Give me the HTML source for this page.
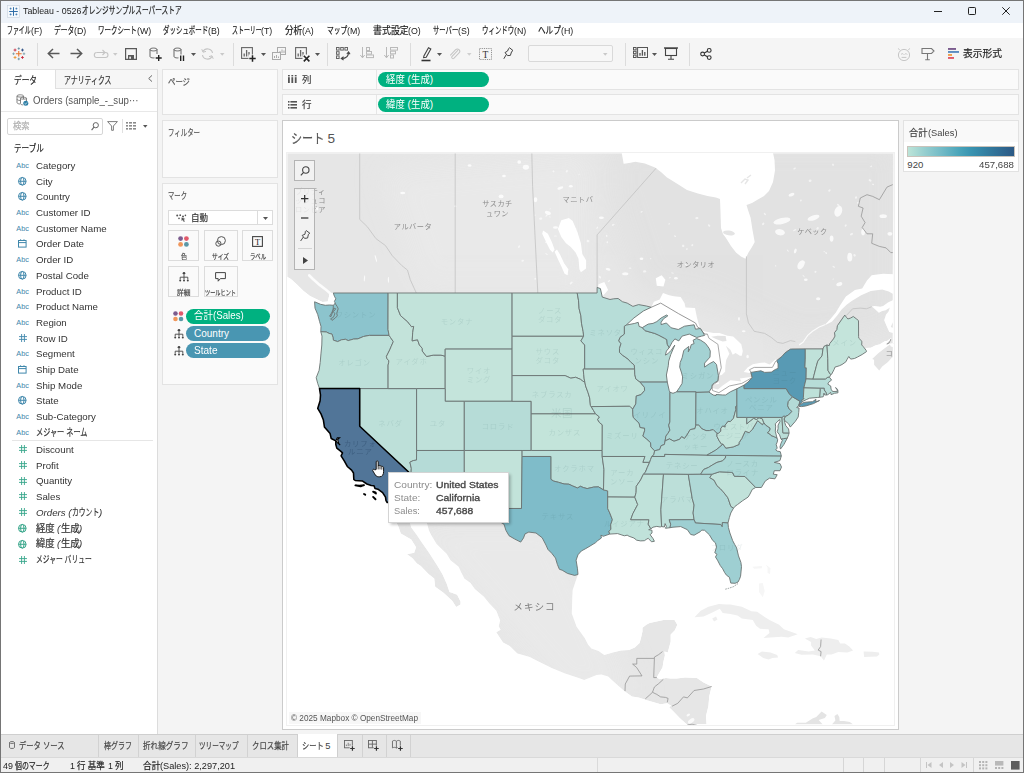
<!DOCTYPE html>
<html lang="ja"><head><meta charset="utf-8"><title>Tableau - 0526オレンジサンプルスーパーストア</title>
<style>
*{box-sizing:border-box;margin:0;padding:0}
html,body{width:1024px;height:773px;overflow:hidden}
body{position:relative;background:#f4f4f4;font-family:"Liberation Sans","Noto Sans CJK JP",sans-serif;color:#333}
.a{position:absolute}
.t{position:absolute;white-space:nowrap;line-height:1;margin-top:-.5em;display:inline-block}
.r{display:inline-block;transform-origin:0 50%}
.j{-webkit-text-stroke:.2px currentColor;font-style:normal}
.ns .j{-webkit-text-stroke:0}
.card{position:absolute;background:#fafafa;border:1px solid #e3e3e3}
.pill{position:absolute;border-radius:8px;height:15px}
.g{background:#00b180}.b{background:#4996b2}
.vd{position:absolute;width:1px;background:#d8d8d8}
.hd{position:absolute;height:1px;background:#e2e2e2}
svg{position:absolute;overflow:visible}
.mk{position:absolute;background:#fafafa;border:1px solid #dcdcdc}
.mapbtn{position:absolute;background:rgba(244,244,244,.84);border:1px solid #b4b4b4}
</style></head><body>
<!-- title bar -->
<div class="a" style="left:0;top:0;width:1024px;height:23px;background:#eef3f9"></div>
<div class="a" style="left:0;top:23px;width:1024px;height:15px;background:#fff"></div>
<div class="a" style="left:0;top:38px;width:1024px;height:31px;background:#f5f5f5"></div>
<!-- data pane -->
<div class="a" style="left:0;top:69px;width:158px;height:665px;background:#fff;border-top:1px solid #e2e2e2;border-right:1px solid #dcdcdc"></div>
<div class="a" style="left:55px;top:69px;width:103px;height:20px;background:#f6f6f6;border:1px solid #e0e0e0;border-right-color:#dcdcdc"></div>
<div class="hd" style="left:1px;top:111px;width:156px;background:#e8e8e8"></div>
<div class="a" style="left:7px;top:118px;width:96px;height:17px;background:#fff;border:1px solid #d6d6d6;border-radius:2px"></div>
<div class="vd" style="left:122px;top:119px;height:14px;background:#e0e0e0"></div>
<div class="hd" style="left:12px;top:440px;width:141px;background:#e6e6e6"></div>
<!-- cards -->
<div class="card" style="left:162px;top:69px;width:116px;height:46px"></div>
<div class="card" style="left:162px;top:120px;width:116px;height:58px"></div>
<div class="card" style="left:162px;top:183px;width:116px;height:202px"></div>
<div class="mk" style="left:168px;top:210px;width:105px;height:15px;background:#fff"></div>
<div class="vd" style="left:257px;top:211px;height:13px;background:#dcdcdc"></div>
<div class="mk" style="left:168px;top:230px;width:31px;height:31px"></div>
<div class="mk" style="left:204px;top:230px;width:34px;height:31px"></div>
<div class="mk" style="left:242px;top:230px;width:31px;height:31px"></div>
<div class="mk" style="left:168px;top:266px;width:31px;height:31px"></div>
<div class="mk" style="left:204px;top:266px;width:34px;height:31px"></div>
<div class="pill g" style="left:186px;top:309px;width:84px"></div>
<div class="pill b" style="left:186px;top:326px;width:84px"></div>
<div class="pill b" style="left:186px;top:343px;width:84px"></div>
<!-- shelves -->
<div class="card" style="left:282px;top:69px;width:737px;height:21px"></div>
<div class="card" style="left:282px;top:94px;width:737px;height:21px"></div>
<div class="vd" style="left:376px;top:70px;height:19px;background:#e6e6e6"></div>
<div class="vd" style="left:376px;top:95px;height:19px;background:#e6e6e6"></div>
<div class="pill g" style="left:378px;top:72px;width:111px;height:15px"></div>
<div class="pill g" style="left:378px;top:97.3px;width:111px;height:15px"></div>
<!-- viz frame -->
<div class="a" style="left:282px;top:120px;width:617px;height:610px;background:#fff;border:1px solid #cbcbcb"></div>
<div class="a" style="left:286px;top:152px;width:609px;height:573.5px;border:1px solid #f0f0f0"></div>
<svg class="map" width="606.6" height="571.2" viewBox="287.0 153.0 606.6 571.2" style="position:absolute;left:287.0px;top:153.0px">
<defs><clipPath id="mc"><rect x="287.0" y="153.0" width="606.6" height="571.2"/></clipPath>
<filter id="bl" x="-10%" y="-10%" width="120%" height="120%"><feGaussianBlur stdDeviation="14"/></filter>
<filter id="b1" x="-5%" y="-5%" width="110%" height="110%"><feGaussianBlur stdDeviation="0.5"/></filter></defs>
<g clip-path="url(#mc)">
<rect x="287.0" y="153.0" width="606.6" height="571.2" fill="#fff"/>
<path d="M287.0,153.0 621.8,153.0 621.8,153.0 623.7,163.7 629.0,163.0 635.4,161.7 645.0,163.5 655.0,167.6 661.0,172.0 666.7,177.3 676.0,183.0 687.0,190.0 698.0,193.5 707.5,196.0 716.0,197.5 720.0,199.0 720.5,211.5 721.0,228.0 723.0,234.0 726.0,238.0 731.0,246.0 736.0,252.5 741.0,256.5 745.5,258.7 748.5,252.5 752.0,247.0 754.7,242.0 752.5,230.0 750.6,217.7 748.0,210.0 746.5,205.0 752.0,203.0 757.0,200.0 764.0,196.0 769.0,191.0 773.0,182.0 775.0,170.5 774.5,160.0 773.0,153.0 893.6,153.0 892.8,274.3 883.2,273.8 871.7,275.3 867.0,280.5 862.2,288.6 855.0,290.1 849.8,293.7 845.9,296.6 840.2,305.3 835.9,312.4 830.7,318.8 825.9,323.7 825.4,325.1 832.1,321.6 837.4,315.2 841.6,309.6 846.9,304.6 851.7,301.0 861.2,295.2 870.8,291.1 882.2,289.4 888.9,291.5 892.8,293.7 892.8,300.2 888.0,302.4 883.2,306.0 880.3,306.7 874.6,306.0 871.7,306.4 873.7,308.1 878.9,312.8 882.2,311.0 885.6,310.3 889.9,307.4 888.5,311.7 886.1,314.5 884.2,320.2 886.5,325.7 889.4,332.0 892.8,332.7 892.8,343.4 891.5,343.6 888.0,343.9 885.6,344.6 888.9,340.9 890.4,339.6 891.8,337.8 889.4,339.3 887.0,340.9 885.1,340.9 879.9,344.3 875.1,345.4 870.8,347.7 865.5,348.1 863.3,346.6 846.9,345.0 789.6,382.1 698.8,474.2 579.4,530.8 573.7,573.1 578.0,574.5 575.6,581.5 572.7,590.0 572.3,597.3 571.8,613.4 576.6,626.7 584.7,637.9 588.0,644.5 591.4,648.6 598.5,651.1 604.3,655.1 612.9,652.6 621.0,650.6 629.1,650.1 634.8,647.6 639.6,643.0 641.0,637.9 642.5,631.3 642.5,627.8 646.3,624.7 649.6,623.1 663.5,620.1 674.5,620.1 677.3,624.7 674.9,630.3 670.7,634.4 670.7,641.5 667.8,652.6 664.4,651.6 664.9,655.6 663.5,661.6 662.5,667.6 657.8,675.6 656.8,677.6 659.7,679.3 665.9,678.1 670.2,678.6 676.9,678.6 685.0,677.4 696.9,678.1 703.6,682.6 711.7,686.5 709.3,696.1 708.4,706.2 706.0,716.0 706.5,723.8 706.5,724.2 686.9,724.2 685.5,723.3 679.7,718.0 673.0,711.1 669.2,707.2 671.1,705.7 667.3,703.3 660.6,704.3 647.7,700.6 638.6,697.4 632.0,696.4 624.3,691.0 615.7,683.6 608.1,676.6 601.4,674.6 596.6,674.9 584.2,680.1 578.8,678.1 565.1,673.6 551.7,668.1 536.0,660.3 529.7,657.1 517.3,653.6 509.7,646.1 503.0,642.5 496.3,632.3 500.6,629.8 498.7,626.2 500.1,620.6 496.3,610.8 489.4,603.5 483.9,596.8 474.8,588.9 470.5,583.1 464.3,578.4 461.0,572.0 458.6,566.7 450.5,560.2 446.6,553.8 440.9,548.3 436.6,544.0 431.3,535.2 429.0,530.8 426.6,522.0 421.3,516.4 417.0,514.1 409.4,510.8 408.9,519.7 411.3,527.5 417.0,535.2 421.3,541.8 429.0,552.7 433.5,559.7 436.6,564.5 442.3,574.1 446.6,583.6 449.5,592.1 452.4,593.1 457.1,594.7 460.5,601.5 460.5,604.6 456.2,606.9 452.4,600.9 443.8,593.1 435.2,586.8 434.2,578.4 428.5,574.1 420.8,566.1 417.0,563.4 412.2,558.1 407.0,554.3 414.2,552.7 416.1,547.2 411.3,539.6 400.8,533.6 398.4,526.4 395.0,519.7 392.2,510.2 387.2,502.5 397.9,491.5 369.3,413.9 350.1,321.6 340.6,294.5 333.3,293.0 330.1,293.0 329.1,295.9 327.7,301.4 322.4,302.0 317.2,299.5 310.0,295.9 303.3,290.8 296.7,284.2 290.9,279.0 287.1,276.8 287.0,276.8Z" fill="#e6e6e6"/>
<g filter="url(#bl)" opacity="0.9"><path d="M610,140 L900,140 L900,330 L800,345 L700,300 L640,290 L610,200Z" fill="#e1e1e1"/><path d="M380,170 L590,150 L590,290 L420,290Z" fill="#e9e9e9"/><path d="M400,520 L560,520 L640,700 L560,700Z" fill="#e9e9e9"/></g>
<path d="M651.2,307.3 653.9,301.7 659.7,299.5 663.0,293.0 669.2,295.2 674.0,296.2 680.7,297.1 684.5,303.1 685.5,307.4 695.0,308.1 696.9,317.3 698.4,323.0 700.3,328.5 694.1,332.7 674.9,332.7 655.8,328.5 641.5,329.9 624.3,327.1 622.4,323.0 632.0,314.5 643.4,308.1Z" fill="#fff"/>
<path d="M664.4,395.0 684.5,395.0 686.4,375.6 685.5,355.8 692.1,353.1 695.0,345.0 697.9,340.9 697.9,334.7 689.3,332.7 673.0,335.4 664.4,355.8 662.5,375.6Z" fill="#fff"/>
<path d="M700.3,328.5 703.6,331.3 707.9,332.0 713.6,333.0 719.4,333.0 727.5,335.8 733.2,336.4 738.0,340.9 741.3,344.3 742.8,351.1 741.8,355.8 739.9,355.8 735.6,353.1 732.7,354.7 730.4,349.7 725.9,345.7 729.4,353.8 726.2,360.1 725.4,365.8 725.1,371.7 721.8,375.0 718.9,375.6 716.0,375.6 701.7,371.7 703.6,355.8 700.7,342.3 697.9,340.9 697.9,334.7 698.8,331.3Z" fill="#fff"/>
<path d="M718.9,375.6 718.4,380.8 718.9,384.1 713.2,384.5 712.2,387.9 717.9,389.6 722.7,385.4 730.4,380.2 737.5,381.1 741.3,381.5 739.9,378.5 749.0,377.3 752.1,376.9 754.2,378.2 749.5,384.7 739.0,391.2 727.5,397.5 715.1,397.5 707.4,393.7 709.3,386.0 714.1,379.5 717.0,375.6Z" fill="#fff"/>
<path d="M750.7,372.2 749.5,373.0 743.7,372.0 747.6,367.4 752.8,364.2 759.3,363.1 764.7,362.5 769.5,364.5 771.4,363.1 775.3,359.5 777.2,359.8 781.0,363.8 780.0,371.7 765.7,375.6 751.4,375.6Z" fill="#fff"/>
<path d="M580.9,272.3 586.1,268.6 586.1,260.2 582.3,254.1 580.9,243.3 577.5,232.2 572.7,221.0 568.9,218.1 561.3,220.2 557.9,229.0 561.3,237.0 566.0,243.3 570.8,247.1 575.6,252.6 578.5,258.7 579.4,269.3Z" fill="#fff"/>
<path d="M567.5,275.3 568.4,269.3 564.1,263.3 560.3,254.9 557.0,249.5 554.6,251.8 558.4,260.2 561.3,266.3 564.6,273.8Z" fill="#fff"/>
<path d="M554.6,249.5 551.7,241.7 547.9,233.8 543.1,230.6 542.2,233.8 546.0,241.7 549.8,249.5 552.7,252.6Z" fill="#fff"/>
<path d="M656.8,285.7 663.5,286.4 665.4,279.8 661.6,275.3 655.8,278.3Z" fill="#fff"/>
<path d="M597.1,293.0 602.3,296.6 608.1,290.1 604.3,282.0 598.5,284.2Z" fill="#fff"/>
<path d="M711.3,336.8 717.9,335.7 725.6,336.1 726.5,340.9 722.7,341.6 716.0,338.9Z" fill="#e3e3e3"/>
<path d="M247.0,113.0 H933.6 V764.2 H247.0 Z M287.0,153.0 621.8,153.0 621.8,153.0 623.7,163.7 629.0,163.0 635.4,161.7 645.0,163.5 655.0,167.6 661.0,172.0 666.7,177.3 676.0,183.0 687.0,190.0 698.0,193.5 707.5,196.0 716.0,197.5 720.0,199.0 720.5,211.5 721.0,228.0 723.0,234.0 726.0,238.0 731.0,246.0 736.0,252.5 741.0,256.5 745.5,258.7 748.5,252.5 752.0,247.0 754.7,242.0 752.5,230.0 750.6,217.7 748.0,210.0 746.5,205.0 752.0,203.0 757.0,200.0 764.0,196.0 769.0,191.0 773.0,182.0 775.0,170.5 774.5,160.0 773.0,153.0 893.6,153.0 892.8,274.3 883.2,273.8 871.7,275.3 867.0,280.5 862.2,288.6 855.0,290.1 849.8,293.7 845.9,296.6 840.2,305.3 835.9,312.4 830.7,318.8 825.9,323.7 825.4,325.1 832.1,321.6 837.4,315.2 841.6,309.6 846.9,304.6 851.7,301.0 861.2,295.2 870.8,291.1 882.2,289.4 888.9,291.5 892.8,293.7 892.8,300.2 888.0,302.4 883.2,306.0 880.3,306.7 874.6,306.0 871.7,306.4 873.7,308.1 878.9,312.8 882.2,311.0 885.6,310.3 889.9,307.4 888.5,311.7 886.1,314.5 884.2,320.2 886.5,325.7 889.4,332.0 892.8,332.7 892.8,343.4 891.5,343.6 888.0,343.9 885.6,344.6 888.9,340.9 890.4,339.6 891.8,337.8 889.4,339.3 887.0,340.9 885.1,340.9 879.9,344.3 875.1,345.4 870.8,347.7 865.5,348.1 863.3,346.6 846.9,345.0 789.6,382.1 698.8,474.2 579.4,530.8 573.7,573.1 578.0,574.5 575.6,581.5 572.7,590.0 572.3,597.3 571.8,613.4 576.6,626.7 584.7,637.9 588.0,644.5 591.4,648.6 598.5,651.1 604.3,655.1 612.9,652.6 621.0,650.6 629.1,650.1 634.8,647.6 639.6,643.0 641.0,637.9 642.5,631.3 642.5,627.8 646.3,624.7 649.6,623.1 663.5,620.1 674.5,620.1 677.3,624.7 674.9,630.3 670.7,634.4 670.7,641.5 667.8,652.6 664.4,651.6 664.9,655.6 663.5,661.6 662.5,667.6 657.8,675.6 656.8,677.6 659.7,679.3 665.9,678.1 670.2,678.6 676.9,678.6 685.0,677.4 696.9,678.1 703.6,682.6 711.7,686.5 709.3,696.1 708.4,706.2 706.0,716.0 706.5,723.8 706.5,724.2 686.9,724.2 685.5,723.3 679.7,718.0 673.0,711.1 669.2,707.2 671.1,705.7 667.3,703.3 660.6,704.3 647.7,700.6 638.6,697.4 632.0,696.4 624.3,691.0 615.7,683.6 608.1,676.6 601.4,674.6 596.6,674.9 584.2,680.1 578.8,678.1 565.1,673.6 551.7,668.1 536.0,660.3 529.7,657.1 517.3,653.6 509.7,646.1 503.0,642.5 496.3,632.3 500.6,629.8 498.7,626.2 500.1,620.6 496.3,610.8 489.4,603.5 483.9,596.8 474.8,588.9 470.5,583.1 464.3,578.4 461.0,572.0 458.6,566.7 450.5,560.2 446.6,553.8 440.9,548.3 436.6,544.0 431.3,535.2 429.0,530.8 426.6,522.0 421.3,516.4 417.0,514.1 409.4,510.8 408.9,519.7 411.3,527.5 417.0,535.2 421.3,541.8 429.0,552.7 433.5,559.7 436.6,564.5 442.3,574.1 446.6,583.6 449.5,592.1 452.4,593.1 457.1,594.7 460.5,601.5 460.5,604.6 456.2,606.9 452.4,600.9 443.8,593.1 435.2,586.8 434.2,578.4 428.5,574.1 420.8,566.1 417.0,563.4 412.2,558.1 407.0,554.3 414.2,552.7 416.1,547.2 411.3,539.6 400.8,533.6 398.4,526.4 395.0,519.7 392.2,510.2 387.2,502.5 397.9,491.5 369.3,413.9 350.1,321.6 340.6,294.5 333.3,293.0 330.1,293.0 329.1,295.9 327.7,301.4 322.4,302.0 317.2,299.5 310.0,295.9 303.3,290.8 296.7,284.2 290.9,279.0 287.1,276.8 287.0,276.8Z" fill="#fff" fill-rule="evenodd"/>
<ellipse cx="729" cy="233" rx="6" ry="2.4" fill="#e4e4e4" transform="rotate(8 729 233)"/><path d="M741,183 l4,-4 l3,1 l-3,4 M747,178 l4,-3" stroke="#e6e6e6" stroke-width="1.4" fill="none"/>
<path d="M694.5,617.3 700.7,610.8 708.4,606.7 718.9,604.1 726.5,604.6 730.4,604.6 741.8,606.7 751.4,611.3 757.1,611.8 764.7,617.0 769.5,620.1 779.1,624.7 783.9,629.3 794.4,632.9 797.7,634.2 788.2,637.4 781.5,636.7 770.5,637.4 763.5,637.9 769.5,632.9 768.6,629.3 760.0,628.8 756.1,625.7 752.8,620.1 741.8,618.5 737.5,615.4 730.4,613.9 722.7,612.9 719.8,608.7 711.3,612.9 703.6,616.5Z" fill="#eeeeee"/>
<path d="M712.2,618.5 716.0,616.5 717.5,619.6 714.1,621.6Z" fill="#eeeeee"/>
<path d="M794.8,653.1 798.2,650.1 808.7,651.6 814.9,650.6 811.1,645.5 811.1,642.0 804.9,638.5 810.6,636.9 816.3,639.0 821.6,637.4 830.7,638.5 838.3,640.0 840.2,643.5 845.0,643.5 849.3,646.6 853.1,650.6 847.4,652.6 838.3,652.1 831.6,654.6 826.8,654.6 824.0,660.6 820.6,656.3 813.0,654.6 801.5,654.8Z" fill="#eeeeee"/>
<path d="M757.6,654.1 761.9,651.6 770.5,652.6 777.2,655.1 778.1,657.6 772.4,658.1 768.6,659.4 763.3,658.1Z" fill="#eeeeee"/>
<path d="M863.6,651.6 872.7,651.8 878.9,652.6 879.4,654.6 877.0,656.6 864.1,657.1Z" fill="#eeeeee"/>
<path d="M759.0,583.6 762.8,583.1 764.7,591.0 762.8,597.3 759.0,592.1Z" fill="#f6f6f6"/>
<path d="M752.3,566.7 761.9,566.1 761.9,568.3 754.2,568.8Z" fill="#f6f6f6"/>
<path d="M765.7,564.5 770.5,568.3 770.0,574.1 767.6,573.1 767.6,567.7Z" fill="#f6f6f6"/>
<path d="M892.8,347.0 890.8,346.4 889.9,344.6 884.4,348.4 878.0,353.4 872.2,359.1 874.1,359.8 874.1,364.8 879.2,370.4 882.2,366.4 888.0,362.1 891.8,357.8 892.8,357.1Z" fill="#e4e4e4"/>
<path d="M892.8,322.3 890.8,326.9 892.8,327.8Z" fill="#e4e4e4"/>
<path d="M794.4,724.8 797.2,722.8 805.8,722.8 812.5,718.4 816.3,717.0 821.6,711.6 826.8,715.0 824.9,718.0 818.7,719.9 823.0,724.8Z" fill="#e4e4e4"/>
<path d="M831.6,724.8 835.4,720.4 834.5,716.0 837.4,714.0 839.3,717.0 839.7,720.9 844.0,720.9 849.8,721.9 853.6,724.8Z" fill="#e4e4e4"/>
<g fill="#fff" opacity="0.8" filter="url(#b1)">
<ellipse cx="801.0" cy="264.8" rx="3.1" ry="4.96" transform="rotate(30 801.0 264.8)"/>
<ellipse cx="849.8" cy="257.2" rx="2.48" ry="4.34" transform="rotate(0 849.8 257.2)"/>
<ellipse cx="839.3" cy="284.2" rx="3.1" ry="1.86" transform="rotate(-20 839.3 284.2)"/>
<ellipse cx="818.2" cy="298.8" rx="2.17" ry="1.55" transform="rotate(0 818.2 298.8)"/>
<ellipse cx="781.9" cy="221.0" rx="8.68" ry="3.1" transform="rotate(-12 781.9 221.0)"/>
<ellipse cx="813.5" cy="217.8" rx="6.2" ry="2.48" transform="rotate(-18 813.5 217.8)"/>
<ellipse cx="838.3" cy="211.3" rx="3.72" ry="5.58" transform="rotate(20 838.3 211.3)"/>
<ellipse cx="765.7" cy="189.6" rx="3.1" ry="1.86" transform="rotate(0 765.7 189.6)"/>
<ellipse cx="791.5" cy="194.7" rx="3.1" ry="1.55" transform="rotate(-20 791.5 194.7)"/>
<ellipse cx="780.0" cy="232.2" rx="4.96" ry="3.1" transform="rotate(10 780.0 232.2)"/>
<ellipse cx="831.6" cy="238.6" rx="1.86" ry="3.1" transform="rotate(0 831.6 238.6)"/>
<ellipse cx="805.8" cy="279.8" rx="1.86" ry="1.24" transform="rotate(0 805.8 279.8)"/>
<ellipse cx="795.3" cy="251.0" rx="1.24" ry="2.48" transform="rotate(20 795.3 251.0)"/>
<ellipse cx="863.1" cy="232.2" rx="1.86" ry="3.1" transform="rotate(0 863.1 232.2)"/>
<ellipse cx="883.2" cy="216.2" rx="3.72" ry="1.86" transform="rotate(0 883.2 216.2)"/>
<ellipse cx="889.9" cy="233.8" rx="2.48" ry="1.86" transform="rotate(0 889.9 233.8)"/>
<ellipse cx="501.1" cy="196.4" rx="2.48" ry="1.86" transform="rotate(0 501.1 196.4)"/>
<ellipse cx="525.9" cy="167.3" rx="3.1" ry="2.48" transform="rotate(0 525.9 167.3)"/>
<ellipse cx="547.9" cy="212.9" rx="3.1" ry="1.86" transform="rotate(20 547.9 212.9)"/>
<ellipse cx="555.5" cy="227.5" rx="2.48" ry="1.24" transform="rotate(0 555.5 227.5)"/>
<ellipse cx="535.5" cy="199.7" rx="1.86" ry="2.48" transform="rotate(0 535.5 199.7)"/>
<ellipse cx="519.2" cy="162.0" rx="1.86" ry="1.86" transform="rotate(0 519.2 162.0)"/>
<ellipse cx="504.0" cy="176.0" rx="1.86" ry="1.24" transform="rotate(0 504.0 176.0)"/>
<ellipse cx="560.3" cy="188.0" rx="3.1" ry="1.24" transform="rotate(-20 560.3 188.0)"/>
<ellipse cx="570.8" cy="186.3" rx="1.86" ry="1.24" transform="rotate(0 570.8 186.3)"/>
<ellipse cx="601.4" cy="217.8" rx="2.48" ry="1.24" transform="rotate(0 601.4 217.8)"/>
<ellipse cx="608.1" cy="269.3" rx="2.48" ry="1.24" transform="rotate(10 608.1 269.3)"/>
<ellipse cx="625.3" cy="273.8" rx="3.1" ry="1.55" transform="rotate(0 625.3 273.8)"/>
<ellipse cx="641.5" cy="258.7" rx="1.86" ry="1.24" transform="rotate(0 641.5 258.7)"/>
<ellipse cx="675.9" cy="278.3" rx="1.86" ry="1.24" transform="rotate(0 675.9 278.3)"/>
<ellipse cx="739.0" cy="318.8" rx="0.93" ry="1.86" transform="rotate(0 739.0 318.8)"/>
<ellipse cx="743.7" cy="331.3" rx="1.86" ry="0.93" transform="rotate(0 743.7 331.3)"/>
<ellipse cx="747.6" cy="356.5" rx="1.24" ry="1.86" transform="rotate(0 747.6 356.5)"/>
<ellipse cx="469.6" cy="165.5" rx="1.86" ry="1.24" transform="rotate(0 469.6 165.5)"/>
<ellipse cx="455.2" cy="206.3" rx="1.24" ry="0.93" transform="rotate(0 455.2 206.3)"/>
<ellipse cx="402.7" cy="193.0" rx="2.48" ry="1.24" transform="rotate(0 402.7 193.0)"/>
<ellipse cx="316.7" cy="208.0" rx="1.24" ry="2.48" transform="rotate(-30 316.7 208.0)"/>
<ellipse cx="307.2" cy="217.8" rx="2.48" ry="0.93" transform="rotate(0 307.2 217.8)"/>
<ellipse cx="375.9" cy="258.7" rx="0.62" ry="3.72" transform="rotate(-15 375.9 258.7)"/>
<ellipse cx="388.4" cy="279.8" rx="0.62" ry="3.1" transform="rotate(0 388.4 279.8)"/>
<ellipse cx="364.5" cy="278.3" rx="0.62" ry="3.1" transform="rotate(5 364.5 278.3)"/>
<ellipse cx="688.3" cy="715.0" rx="1.86" ry="1.24" transform="rotate(-30 688.3 715.0)"/>
<ellipse cx="691.2" cy="720.9" rx="3.72" ry="1.86" transform="rotate(-35 691.2 720.9)"/>
<ellipse cx="630.1" cy="268.2" rx="1.4" ry="0.6" opacity=".75" transform="rotate(8 630.1 268.2)"/>
<ellipse cx="546.7" cy="215.4" rx="1.8" ry="0.7" opacity=".75" transform="rotate(-49 546.7 215.4)"/>
<ellipse cx="670.0" cy="277.6" rx="0.7" ry="0.8" opacity=".75" transform="rotate(45 670.0 277.6)"/>
<ellipse cx="535.0" cy="215.1" rx="0.7" ry="0.7" opacity=".75" transform="rotate(11 535.0 215.1)"/>
<ellipse cx="824.2" cy="251.7" rx="0.8" ry="0.6" opacity=".75" transform="rotate(-21 824.2 251.7)"/>
<ellipse cx="550.0" cy="216.9" rx="0.8" ry="0.6" opacity=".75" transform="rotate(31 550.0 216.9)"/>
<ellipse cx="535.3" cy="278.8" rx="0.9" ry="1.0" opacity=".75" transform="rotate(-6 535.3 278.8)"/>
<ellipse cx="794.7" cy="230.1" rx="1.8" ry="0.8" opacity=".75" transform="rotate(-29 794.7 230.1)"/>
<ellipse cx="800.9" cy="200.5" rx="0.9" ry="0.9" opacity=".75" transform="rotate(7 800.9 200.5)"/>
<ellipse cx="692.3" cy="245.1" rx="1.2" ry="0.9" opacity=".75" transform="rotate(-51 692.3 245.1)"/>
<ellipse cx="555.4" cy="236.0" rx="1.6" ry="0.6" opacity=".75" transform="rotate(2 555.4 236.0)"/>
<ellipse cx="540.7" cy="218.6" rx="1.6" ry="1.1" opacity=".75" transform="rotate(-17 540.7 218.6)"/>
<ellipse cx="764.9" cy="214.0" rx="1.4" ry="0.8" opacity=".75" transform="rotate(47 764.9 214.0)"/>
<ellipse cx="546.5" cy="254.0" rx="1.5" ry="0.5" opacity=".75" transform="rotate(33 546.5 254.0)"/>
<ellipse cx="873.1" cy="184.4" rx="1.0" ry="0.8" opacity=".75" transform="rotate(25 873.1 184.4)"/>
<ellipse cx="641.6" cy="211.8" rx="1.2" ry="0.7" opacity=".75" transform="rotate(-24 641.6 211.8)"/>
<ellipse cx="559.5" cy="256.7" rx="1.1" ry="1.1" opacity=".75" transform="rotate(-50 559.5 256.7)"/>
<ellipse cx="572.9" cy="238.0" rx="1.0" ry="0.6" opacity=".75" transform="rotate(-5 572.9 238.0)"/>
<ellipse cx="826.2" cy="253.0" rx="1.1" ry="0.8" opacity=".75" transform="rotate(53 826.2 253.0)"/>
<ellipse cx="650.7" cy="258.7" rx="0.7" ry="0.6" opacity=".75" transform="rotate(24 650.7 258.7)"/>
<ellipse cx="597.3" cy="227.7" rx="1.4" ry="0.7" opacity=".75" transform="rotate(-60 597.3 227.7)"/>
<ellipse cx="565.4" cy="221.5" rx="1.4" ry="0.7" opacity=".75" transform="rotate(-44 565.4 221.5)"/>
<ellipse cx="763.2" cy="223.9" rx="1.4" ry="1.0" opacity=".75" transform="rotate(-54 763.2 223.9)"/>
<ellipse cx="858.1" cy="202.9" rx="1.3" ry="0.8" opacity=".75" transform="rotate(-10 858.1 202.9)"/>
<ellipse cx="550.1" cy="208.9" rx="0.7" ry="0.5" opacity=".75" transform="rotate(-34 550.1 208.9)"/>
<ellipse cx="672.5" cy="273.0" rx="1.4" ry="0.6" opacity=".75" transform="rotate(12 672.5 273.0)"/>
<ellipse cx="567.5" cy="273.9" rx="1.1" ry="0.5" opacity=".75" transform="rotate(51 567.5 273.9)"/>
<ellipse cx="588.0" cy="241.1" rx="1.4" ry="1.2" opacity=".75" transform="rotate(17 588.0 241.1)"/>
<ellipse cx="644.7" cy="271.4" rx="1.7" ry="1.2" opacity=".75" transform="rotate(-1 644.7 271.4)"/>
<ellipse cx="686.9" cy="249.0" rx="0.8" ry="1.0" opacity=".75" transform="rotate(34 686.9 249.0)"/>
<ellipse cx="571.2" cy="283.0" rx="1.8" ry="0.9" opacity=".75" transform="rotate(-42 571.2 283.0)"/>
<ellipse cx="787.8" cy="250.6" rx="1.4" ry="0.6" opacity=".75" transform="rotate(48 787.8 250.6)"/>
<ellipse cx="607.3" cy="242.3" rx="0.8" ry="1.0" opacity=".75" transform="rotate(8 607.3 242.3)"/>
<ellipse cx="709.1" cy="225.5" rx="1.4" ry="0.9" opacity=".75" transform="rotate(40 709.1 225.5)"/>
<ellipse cx="870.1" cy="180.3" rx="1.6" ry="1.1" opacity=".75" transform="rotate(34 870.1 180.3)"/>
<ellipse cx="804.2" cy="262.4" rx="1.2" ry="1.0" opacity=".75" transform="rotate(-57 804.2 262.4)"/>
<ellipse cx="799.4" cy="229.3" rx="0.9" ry="0.9" opacity=".75" transform="rotate(-16 799.4 229.3)"/>
<ellipse cx="871.2" cy="166.4" rx="1.1" ry="0.7" opacity=".75" transform="rotate(-31 871.2 166.4)"/>
<ellipse cx="683.2" cy="245.8" rx="1.2" ry="1.2" opacity=".75" transform="rotate(18 683.2 245.8)"/>
<ellipse cx="817.6" cy="228.4" rx="1.4" ry="1.1" opacity=".75" transform="rotate(-50 817.6 228.4)"/>
<ellipse cx="815.5" cy="271.8" rx="1.1" ry="1.0" opacity=".75" transform="rotate(-35 815.5 271.8)"/>
<ellipse cx="686.1" cy="264.9" rx="1.6" ry="0.7" opacity=".75" transform="rotate(42 686.1 264.9)"/>
<ellipse cx="856.0" cy="197.5" rx="1.2" ry="1.0" opacity=".75" transform="rotate(-50 856.0 197.5)"/>
<ellipse cx="775.7" cy="265.9" rx="0.8" ry="0.6" opacity=".75" transform="rotate(55 775.7 265.9)"/>
<ellipse cx="569.1" cy="219.8" rx="0.6" ry="1.1" opacity=".75" transform="rotate(32 569.1 219.8)"/>
<ellipse cx="851.5" cy="234.1" rx="1.7" ry="1.1" opacity=".75" transform="rotate(-33 851.5 234.1)"/>
<ellipse cx="522.7" cy="260.8" rx="1.3" ry="1.0" opacity=".75" transform="rotate(-19 522.7 260.8)"/>
<ellipse cx="606.7" cy="235.9" rx="0.8" ry="1.1" opacity=".75" transform="rotate(-15 606.7 235.9)"/>
<ellipse cx="838.4" cy="205.2" rx="1.7" ry="0.9" opacity=".75" transform="rotate(45 838.4 205.2)"/>
<ellipse cx="845.7" cy="225.6" rx="1.3" ry="0.9" opacity=".75" transform="rotate(-58 845.7 225.6)"/>
<ellipse cx="829.4" cy="190.4" rx="1.4" ry="1.0" opacity=".75" transform="rotate(-41 829.4 190.4)"/>
<ellipse cx="575.1" cy="229.2" rx="1.5" ry="0.9" opacity=".75" transform="rotate(-19 575.1 229.2)"/>
<ellipse cx="833.2" cy="279.1" rx="0.8" ry="0.5" opacity=".75" transform="rotate(-48 833.2 279.1)"/>
<ellipse cx="696.9" cy="218.1" rx="1.6" ry="1.1" opacity=".75" transform="rotate(-4 696.9 218.1)"/>
<ellipse cx="613.2" cy="224.8" rx="1.6" ry="0.9" opacity=".75" transform="rotate(-29 613.2 224.8)"/>
<ellipse cx="854.6" cy="255.3" rx="1.3" ry="1.2" opacity=".75" transform="rotate(47 854.6 255.3)"/>
<ellipse cx="675.0" cy="236.2" rx="1.1" ry="0.7" opacity=".75" transform="rotate(25 675.0 236.2)"/>
<ellipse cx="599.9" cy="277.2" rx="1.5" ry="1.0" opacity=".75" transform="rotate(54 599.9 277.2)"/>
<ellipse cx="794.6" cy="168.5" rx="1.4" ry="0.8" opacity=".75" transform="rotate(-28 794.6 168.5)"/>
<ellipse cx="833.0" cy="164.7" rx="0.9" ry="1.2" opacity=".75" transform="rotate(-10 833.0 164.7)"/>
<ellipse cx="833.8" cy="266.8" rx="1.5" ry="0.7" opacity=".75" transform="rotate(30 833.8 266.8)"/>
<ellipse cx="669.2" cy="223.9" rx="1.0" ry="0.6" opacity=".75" transform="rotate(-20 669.2 223.9)"/>
<ellipse cx="546.0" cy="242.4" rx="1.0" ry="0.8" opacity=".75" transform="rotate(30 546.0 242.4)"/>
<ellipse cx="519.1" cy="246.6" rx="1.4" ry="0.9" opacity=".75" transform="rotate(-52 519.1 246.6)"/>
<ellipse cx="553.5" cy="171.4" rx="0.9" ry="1.1" opacity=".75" transform="rotate(-50 553.5 171.4)"/>
<ellipse cx="609.0" cy="281.1" rx="1.6" ry="0.7" opacity=".75" transform="rotate(-44 609.0 281.1)"/>
<ellipse cx="810.1" cy="180.7" rx="1.5" ry="1.2" opacity=".75" transform="rotate(-9 810.1 180.7)"/>
<ellipse cx="566.8" cy="171.3" rx="1.3" ry="1.0" opacity=".75" transform="rotate(-49 566.8 171.3)"/>
<ellipse cx="579.1" cy="174.5" rx="0.9" ry="0.5" opacity=".75" transform="rotate(-49 579.1 174.5)"/>
<ellipse cx="803.6" cy="276.0" rx="1.7" ry="0.5" opacity=".75" transform="rotate(50 803.6 276.0)"/>
</g>
<path d="M799.1,345.0 803.0,342.3 807.7,335.4 812.5,331.3 819.2,327.1 825.4,324.4" fill="none" stroke="#fff" stroke-width="1.1" opacity=".85"/>
<path d="M776.2,360.5 781.9,356.5 786.7,351.1 792.5,349.1 823.0,348.9 824.0,346.4 827.0,345.0 829.2,345.7 833.5,338.9 835.0,336.1 834.5,332.7 836.9,329.6 837.4,325.7 844.8,315.1" fill="none" stroke="#b5b5b5" stroke-width=".7"/>
<g fill="none" stroke="#bdbdbd" stroke-width=".7">
<path d="M359.7,147.8 359.7,219.4 367.3,226.7 375.9,238.6 385.5,245.6 392.2,255.6 401.7,265.5 407.5,270.1 410.3,279.8 416.3,293.0"/>
<path d="M455.2,147.8 455.2,293.0"/>
<path d="M531.7,147.8 532.6,186.3 537.8,293.0"/>
<path d="M656.1,168.2 597.1,234.9 597.1,287.4"/>
<path d="M746.4,256.4 746.4,313.8 748.5,323.0 754.2,331.3 764.7,333.4 771.4,337.5 777.2,342.3 782.9,343.4 790.5,340.6 795.3,341.6"/>
<path d="M846.4,315.5 852.6,308.8 860.3,308.1 866.5,308.8 871.7,306.7"/>
</g>
<path d="M892.8,184.6 887.0,187.1 879.4,199.7 872.7,196.4 867.0,194.7 860.3,198.0 858.4,206.3 863.1,208.0 861.2,216.2 865.1,222.6 862.2,227.5 867.0,233.8 872.7,233.8 871.7,243.3 879.4,246.4 886.1,247.9 890.8,252.6 892.8,252.6" fill="none" stroke="#8d8d8d" stroke-width=".7"/>
<path d="M651.2,307.3 660.7,303.1 678.8,313.8 695.5,323.0 697.6,327.1 700.7,328.8 702.7,332.0 705.0,334.1 707.4,334.1" fill="none" stroke="#8c8c8c" stroke-width=".9"/>
<path d="M707.4,334.1 708.9,338.2 717.9,344.3 721.3,367.8 718.7,375.6 717.9,381.5 714.6,383.7 712.0,386.0 712.5,390.5 718.9,392.7 729.4,386.0 741.8,383.4 751.9,377.8 750.9,372.1 749.5,369.7 754.2,367.4 772.4,367.4 775.7,361.1" fill="none" stroke="#999" stroke-width=".85"/>
<g fill="none" stroke="#8a8a8a" stroke-width=".7">
<path d="M625.0,691.1 625.3,684.0 629.6,676.1 642.0,675.9 636.7,667.6 632.6,664.1 636.8,664.1 636.8,658.4 654.4,658.4"/>
<path d="M654.4,657.1 654.4,658.4 653.7,677.6 656.8,677.6"/>
<path d="M654.4,657.1 658.7,654.6 662.5,651.6"/>
<path d="M663.3,679.4 658.7,683.6 654.4,687.0 652.5,692.3 649.2,695.4 645.3,698.9"/>
<path d="M652.5,692.3 656.8,694.4 660.6,696.9 665.4,697.4 668.1,698.4 667.3,702.3"/>
<path d="M672.1,706.2 677.8,703.3 683.5,696.9 687.4,697.9 694.1,690.5 703.6,689.0 711.7,686.5"/>
<path d="M687.4,724.8 692.1,724.3 696.9,725.3"/>
<path d="M820.6,656.3 821.1,651.6 818.2,650.1 820.6,646.6 821.1,639.5"/>
</g>
<path d="M330.6,293.7 326.3,290.1 319.6,284.9 312.9,279.0 309.1,275.3" fill="none" stroke="#fff" stroke-width="2.6" opacity=".85" stroke-linecap="round" filter="url(#b1)"/>
<path d="M314.3,300.0 321.5,303.1 328.2,303.4 331.0,300.2 330.1,295.2" fill="none" stroke="#fff" stroke-width="2.2" opacity=".9" stroke-linecap="round"/>
<g stroke="#6c7574" stroke-width=".92" stroke-linejoin="round">
<path d="M333.3,293.0 334.4,296.2 335.8,298.8 334.4,301.4 335.3,303.1 333.4,305.3 329.6,305.0 325.3,305.3 320.5,304.3 314.6,301.8 315.0,308.1 317.7,314.5 319.6,321.6 321.0,326.4 320.8,331.7 326.3,332.0 329.1,333.4 332.0,334.1 333.0,337.5 333.4,340.2 337.7,341.6 341.5,339.8 345.4,339.3 348.2,340.6 353.5,339.1 357.8,338.9 363.5,336.5 369.3,335.4 389.1,335.4 388.0,329.5 388.1,293.0 333.3,293.0Z" fill="#8cc4cd"/>
<path d="M320.8,331.7 322.0,336.1 321.8,345.0 321.0,353.1 320.2,362.5 319.1,370.4 316.2,377.7 317.7,383.4 319.5,388.6 359.7,388.6 388.1,388.6 388.1,365.1 388.7,362.5 388.8,360.5 386.9,358.7 386.4,356.5 389.8,349.7 391.2,346.4 393.3,341.6 390.5,337.5 389.1,335.4 369.3,335.4 363.5,336.5 357.8,338.9 353.5,339.1 348.2,340.6 345.4,339.3 341.5,339.8 337.7,341.6 333.4,340.2 333.0,337.5 332.0,334.1 329.1,333.4 326.3,332.0 320.8,331.7Z" fill="#bde0d9"/>
<path d="M359.7,388.6 388.1,388.6 416.6,388.6 416.6,450.5 416.5,460.1 413.2,460.6 409.9,462.2 411.3,468.3 411.0,474.2 359.7,426.3 359.7,388.6Z" fill="#bde0d9"/>
<path d="M388.1,293.0 397.4,293.0 397.4,307.7 400.6,315.7 407.5,321.6 411.5,326.7 413.7,326.4 412.7,332.7 412.2,340.9 417.5,339.7 419.4,345.0 422.3,348.4 422.3,351.1 426.6,356.5 433.3,355.1 440.9,355.1 445.2,356.2 445.2,388.6 416.6,388.6 388.1,388.6 388.1,365.1 388.7,362.5 388.8,360.5 386.9,358.7 386.4,356.5 389.8,349.7 391.2,346.4 393.3,341.6 390.5,337.5 389.1,335.4 388.0,329.5 388.1,293.0Z" fill="#c3e3da"/>
<path d="M397.4,293.0 512.1,293.0 512.1,336.3 512.1,349.1 445.2,349.1 445.2,356.2 440.9,355.1 433.3,355.1 426.6,356.5 422.3,351.1 422.3,348.4 419.4,345.0 417.5,339.7 412.2,340.9 412.7,332.7 413.7,326.4 411.5,326.7 407.5,321.6 400.6,315.7 397.4,307.7 397.4,293.0Z" fill="#c2e3da"/>
<path d="M445.2,356.2 445.2,349.1 512.1,349.1 512.1,375.6 512.1,401.3 464.3,401.3 445.2,401.3 445.2,388.6 445.2,356.2Z" fill="#c4e4db"/>
<path d="M416.6,388.6 445.2,388.6 445.2,401.3 464.3,401.3 464.3,450.5 416.6,450.5 416.6,388.6Z" fill="#bfe1da"/>
<path d="M464.3,401.3 512.1,401.3 531.2,401.3 531.2,413.9 531.2,450.5 522.1,450.5 464.3,450.5 464.3,401.3Z" fill="#b6dcd7"/>
<path d="M416.6,450.5 464.3,450.5 464.3,516.1 445.0,516.1 409.3,503.0 410.1,500.4 412.2,497.2 410.3,492.6 412.2,486.9 415.6,482.6 412.7,477.6 411.0,474.2 411.3,468.3 409.9,462.2 413.2,460.6 416.5,460.1 416.6,450.5Z" fill="#b5dbd7"/>
<path d="M464.3,450.5 522.1,450.5 522.1,456.5 521.5,508.5 487.5,508.5 488.4,511.0 472.4,511.0 472.4,516.1 464.3,516.1 464.3,450.5Z" fill="#c2e3da"/>
<path d="M512.1,293.0 577.2,293.0 578.5,300.2 579.1,308.6 580.9,315.9 581.5,323.2 583.2,331.7 583.6,336.3 512.1,336.3 512.1,293.0Z" fill="#c4e4db"/>
<path d="M512.1,336.3 583.6,336.3 580.9,340.9 584.7,345.0 584.7,369.1 583.2,369.1 583.7,374.3 584.2,378.9 584.9,382.3 582.3,380.8 580.4,379.3 575.6,377.3 570.8,378.2 565.1,375.6 512.1,375.6 512.1,349.1 512.1,336.3Z" fill="#c4e4db"/>
<path d="M512.1,375.6 565.1,375.6 570.8,378.2 575.6,377.3 580.4,379.3 582.3,380.8 584.9,382.3 585.6,386.0 588.0,392.4 589.7,398.0 590.4,405.4 591.2,406.6 593.7,410.8 595.6,413.9 531.2,413.9 531.2,401.3 512.1,401.3 512.1,375.6Z" fill="#c1e2da"/>
<path d="M531.2,413.9 595.6,413.9 599.5,417.0 597.6,419.5 599.5,422.6 602.3,424.8 602.2,450.5 531.2,450.5 531.2,413.9Z" fill="#c3e4da"/>
<path d="M522.1,450.5 531.2,450.5 602.2,450.5 602.2,456.5 604.0,469.5 603.5,489.9 598.5,486.9 593.7,487.1 587.1,488.6 583.2,487.5 580.4,486.3 577.5,488.0 572.7,486.0 568.9,484.2 564.1,484.0 558.4,482.3 553.6,481.1 550.8,479.3 550.8,456.5 522.1,456.5 522.1,450.5Z" fill="#bbdfd9"/>
<path d="M522.1,456.5 550.8,456.5 550.8,479.3 553.6,481.1 558.4,482.3 564.1,484.0 568.9,484.2 572.7,486.0 577.5,488.0 580.4,486.3 583.2,487.5 587.1,488.6 593.7,487.1 598.5,486.9 603.5,489.9 607.7,490.9 607.7,497.0 607.7,508.5 609.8,513.0 612.4,519.7 610.7,524.7 610.9,529.2 609.0,531.4 609.6,534.1 603.3,536.3 600.9,535.2 601.4,538.0 597.6,540.7 595.7,542.6 589.0,546.7 585.2,548.9 581.3,551.0 578.0,554.8 576.1,560.2 577.5,568.8 578.0,574.5 574.6,575.4 567.5,573.4 562.2,570.2 559.4,569.3 557.4,564.5 555.5,558.1 551.7,553.2 547.9,549.4 546.0,545.1 542.2,537.8 536.0,533.0 528.8,532.1 525.0,533.9 523.5,538.0 520.7,542.1 514.6,539.0 509.0,535.7 505.9,530.3 504.0,524.2 499.2,521.4 491.5,514.5 488.4,511.0 487.5,508.5 521.5,508.5 522.1,456.5Z" fill="#7fbcc9"/>
<path d="M577.2,293.0 597.1,293.0 597.1,287.4 600.4,288.6 602.3,297.1 610.0,299.5 613.8,298.8 618.1,298.5 622.4,301.7 627.2,303.1 632.9,306.4 638.6,304.6 646.3,306.0 651.2,307.3 643.4,311.0 633.9,318.0 626.2,325.1 624.4,326.3 624.4,334.1 620.0,337.5 618.8,340.9 621.0,343.6 619.5,348.4 619.5,352.4 622.4,355.1 628.1,359.1 630.5,361.8 634.3,365.1 634.6,369.1 584.7,369.1 584.7,345.0 580.9,340.9 583.6,336.3 583.2,331.7 581.5,323.2 580.9,315.9 579.1,308.6 578.5,300.2 577.2,293.0Z" fill="#b7ddd8"/>
<path d="M584.7,369.1 634.6,369.1 634.8,374.3 635.8,378.9 640.1,382.1 644.4,387.3 644.6,390.5 641.0,394.7 636.3,396.0 635.8,403.9 632.7,409.2 629.8,406.3 591.2,406.6 590.4,405.4 589.7,398.0 588.0,392.4 585.6,386.0 584.9,382.3 584.2,378.9 583.7,374.3 583.2,369.1 584.7,369.1Z" fill="#c2e3da"/>
<path d="M591.2,406.6 629.8,406.3 632.7,409.2 632.9,414.8 633.4,417.6 639.1,423.2 640.1,427.5 644.6,428.1 644.6,430.8 642.9,436.1 646.8,439.1 650.6,442.7 650.9,446.9 654.6,450.8 653.9,454.7 651.8,456.5 650.6,459.5 649.6,462.4 642.8,462.4 644.9,456.5 602.2,456.5 602.2,450.5 602.3,424.8 599.5,422.6 597.6,419.5 599.5,417.0 595.6,413.9 593.7,410.8 591.2,406.6Z" fill="#badfd8"/>
<path d="M602.2,456.5 644.9,456.5 642.8,462.4 649.6,462.4 647.2,467.7 645.3,472.4 643.4,474.2 640.6,480.0 636.3,486.3 636.1,492.6 634.8,497.2 607.7,497.0 607.7,490.9 603.5,489.9 604.0,469.5 602.2,456.5Z" fill="#bfe1da"/>
<path d="M607.7,497.0 634.8,497.2 637.7,504.6 632.9,513.6 630.7,519.7 648.9,519.7 648.2,524.2 650.9,528.8 648.7,529.7 652.0,530.3 652.0,533.0 650.1,534.7 653.0,538.5 654.4,541.3 651.5,541.8 648.2,538.3 646.3,539.4 644.4,540.7 640.6,540.9 636.7,540.2 633.9,538.0 629.1,536.3 627.2,535.2 624.3,535.8 617.6,533.6 609.6,534.1 609.0,531.4 610.9,529.2 610.7,524.7 612.4,519.7 609.8,513.0 607.7,508.5 607.7,497.0Z" fill="#c0e2da"/>
<path d="M626.2,325.1 634.8,323.4 638.2,322.3 639.1,326.4 642.3,327.6 645.1,330.7 654.9,333.5 658.7,335.2 664.4,338.2 666.8,339.6 667.3,344.3 669.2,347.7 666.4,351.1 665.4,355.1 667.8,353.8 671.1,350.4 674.8,345.1 670.8,354.5 668.7,361.1 668.3,365.8 666.4,375.0 667.3,382.1 640.1,382.1 635.8,378.9 634.8,374.3 634.6,369.1 634.3,365.1 630.5,361.8 628.1,359.1 622.4,355.1 619.5,352.4 619.5,348.4 621.0,343.6 618.8,340.9 620.0,337.5 624.4,334.1 624.4,326.3 626.2,325.1Z" fill="#b6dcd7"/>
<path d="M640.1,382.1 667.3,382.1 669.2,390.5 670.0,392.3 669.9,422.0 668.7,425.1 669.9,430.2 667.8,433.6 665.9,436.1 665.1,440.9 664.4,444.5 661.1,445.7 659.7,449.6 654.6,450.8 650.9,446.9 650.6,442.7 646.8,439.1 642.9,436.1 644.6,430.8 644.6,428.1 640.1,427.5 639.1,423.2 633.4,417.6 632.9,414.8 632.7,409.2 635.8,403.9 636.3,396.0 641.0,394.7 644.6,390.5 644.4,387.3 640.1,382.1Z" fill="#a2d1d3"/>
<path d="M670.0,392.3 673.0,393.3 675.9,392.2 676.7,391.7 696.0,391.7 696.0,392.4 695.8,425.1 695.0,428.7 690.2,429.6 686.9,435.2 684.5,438.5 681.6,436.7 679.7,439.3 674.0,441.3 669.5,438.9 665.1,440.9 665.9,436.1 667.8,433.6 669.9,430.2 668.7,425.1 669.9,422.0 670.0,392.3Z" fill="#add7d5"/>
<path d="M642.3,327.6 648.2,324.1 653.0,323.4 656.8,321.6 661.1,318.0 666.8,314.9 667.8,315.9 663.5,318.8 661.1,322.3 661.1,324.6 666.4,323.0 671.1,327.8 678.3,329.5 684.5,326.2 694.1,324.8 695.5,329.2 700.3,328.5 702.7,332.0 704.6,335.4 701.7,336.1 696.7,337.5 689.3,334.1 682.1,336.1 678.8,340.9 674.9,338.9 672.1,342.3 669.2,347.7 667.3,344.3 666.8,339.6 664.4,338.2 658.7,335.2 654.9,333.5 645.1,330.7 642.3,327.6Z" fill="#a4d2d3"/>
<path d="M676.7,391.7 679.7,387.3 682.1,383.4 682.6,376.9 681.6,373.0 679.7,367.1 680.2,362.5 682.1,357.8 683.8,350.4 688.8,346.4 688.3,351.8 690.2,348.4 691.2,344.7 694.1,343.6 693.1,340.2 696.6,338.5 700.7,340.2 705.5,343.4 709.1,348.3 710.3,351.1 710.0,357.1 708.4,358.9 704.6,363.1 704.6,367.1 709.3,363.8 713.6,361.5 716.5,364.5 718.4,375.6 717.9,380.8 714.6,382.8 712.2,384.7 711.7,387.9 708.9,392.1 696.0,392.4 696.0,391.7 676.7,391.7Z" fill="#a4d2d3"/>
<path d="M696.0,392.4 708.9,392.1 713.2,395.0 716.0,395.6 716.0,394.5 722.7,395.0 725.6,395.0 730.4,391.8 736.9,388.8 736.9,405.9 735.6,406.6 735.9,409.4 734.9,413.0 733.5,418.3 730.4,421.6 728.0,421.4 726.9,423.0 725.1,425.1 725.1,427.1 722.7,426.0 720.8,428.5 720.8,431.2 718.4,433.4 717.0,433.4 713.2,429.6 709.3,430.6 706.0,430.6 701.7,428.7 698.8,425.1 695.8,425.1 696.0,392.4Z" fill="#a3d2d3"/>
<path d="M665.1,440.9 669.5,438.9 674.0,441.3 679.7,439.3 681.6,436.7 684.5,438.5 686.9,435.2 690.2,429.6 695.0,428.7 695.8,425.1 698.8,425.1 701.7,428.7 706.0,430.6 709.3,430.6 713.2,429.6 717.0,433.4 717.0,436.4 718.9,440.3 721.3,443.9 723.0,444.1 719.8,446.9 715.8,450.1 706.7,455.3 664.7,454.4 664.7,456.5 651.8,456.5 653.9,454.7 654.6,450.8 659.7,449.6 661.1,445.7 664.4,444.5 665.1,440.9Z" fill="#b4dbd7"/>
<path d="M651.8,456.5 664.7,456.5 664.7,454.4 706.7,455.3 725.8,455.4 725.3,458.3 722.2,461.0 717.0,462.4 712.2,465.1 708.4,467.5 703.6,469.5 700.6,474.3 688.3,474.4 663.5,474.2 643.4,474.2 645.3,472.4 647.2,467.7 649.6,462.4 650.6,459.5 651.8,456.5Z" fill="#b7dcd8"/>
<path d="M643.4,474.2 663.5,474.2 660.9,509.7 661.6,526.6 660.1,527.0 656.8,526.4 653.0,527.2 650.9,528.8 648.2,524.2 648.9,519.7 630.7,519.7 632.9,513.6 637.7,504.6 634.8,497.2 636.1,492.6 636.3,486.3 640.6,480.0 643.4,474.2Z" fill="#c0e2da"/>
<path d="M663.5,474.2 688.3,474.4 692.3,498.7 694.1,505.1 693.1,513.0 694.1,519.7 669.2,519.8 670.7,524.2 670.0,527.7 665.4,528.3 666.4,526.4 665.1,523.6 664.4,527.0 661.6,526.6 660.9,509.7 663.5,474.2Z" fill="#bcdfd9"/>
<path d="M688.3,474.4 700.6,474.3 712.1,474.2 709.8,477.6 714.1,480.2 717.0,485.7 720.3,488.6 723.2,491.8 727.5,497.2 728.3,498.9 730.8,506.3 733.5,508.2 730.8,513.0 729.4,517.5 728.0,523.0 722.4,522.5 722.2,526.8 720.7,524.5 695.4,523.0 694.1,519.7 693.1,513.0 694.1,505.1 692.3,498.7 688.3,474.4Z" fill="#afd8d6"/>
<path d="M670.0,527.7 670.7,524.2 669.2,519.8 694.1,519.7 695.4,523.0 720.7,524.5 722.2,526.8 722.4,522.5 728.0,523.0 728.4,527.5 729.9,533.0 732.7,540.7 734.7,544.5 736.6,547.8 738.5,555.9 740.9,562.4 741.5,566.7 740.6,576.2 739.4,579.4 738.0,582.1 735.1,583.3 730.8,583.1 729.4,577.3 726.5,575.2 724.6,572.5 722.7,568.8 720.3,565.6 717.5,560.2 715.5,557.0 717.0,554.3 714.8,552.7 716.5,547.2 715.5,542.9 712.7,540.4 709.3,534.7 704.6,530.3 701.7,530.1 700.3,531.7 694.1,535.2 690.7,534.5 687.4,529.7 680.7,526.6 673.0,527.2 670.0,527.7Z" fill="#9ecfd2"/>
<path d="M712.1,474.2 719.4,471.8 731.9,472.4 732.9,473.0 734.4,476.3 745.0,476.5 755.7,487.5 752.3,489.4 749.5,494.9 748.0,497.2 742.8,500.6 737.5,504.6 735.1,506.3 733.5,508.2 730.8,506.3 728.3,498.9 727.5,497.2 723.2,491.8 720.3,488.6 717.0,485.7 714.1,480.2 709.8,477.6 712.1,474.2Z" fill="#c1e2da"/>
<path d="M725.8,455.4 781.3,455.9 780.0,460.6 774.3,462.4 780.0,463.6 781.5,467.1 780.0,470.7 774.3,470.7 773.3,474.2 777.2,474.7 775.0,478.8 769.5,478.2 765.2,481.1 761.4,487.5 755.7,487.5 745.0,476.5 734.4,476.3 732.9,473.0 731.9,472.4 719.4,471.8 712.1,474.2 700.6,474.3 703.6,469.5 708.4,467.5 712.2,465.1 717.0,462.4 722.2,461.0 725.3,458.3 725.8,455.4Z" fill="#acd7d5"/>
<path d="M763.6,422.3 762.6,424.7 757.6,420.6 752.6,429.1 749.2,432.7 745.2,431.2 741.8,438.5 739.0,442.7 739.0,444.5 733.2,446.9 730.1,447.5 725.8,448.1 723.0,444.1 719.8,446.9 715.8,450.1 706.7,455.3 725.8,455.4 781.3,455.9 780.3,451.7 777.2,451.1 775.7,449.9 777.2,448.1 776.2,444.5 777.2,442.1 777.7,439.8 777.0,438.0 774.3,436.7 771.0,435.5 770.2,434.2 767.6,433.0 770.0,430.0 770.1,428.1 768.1,426.7 765.7,425.1 763.6,422.3Z" fill="#a6d3d4"/>
<path d="M787.3,438.1 783.9,444.5 780.5,449.1 780.0,446.9 781.0,443.3 782.4,440.3 781.0,439.1 783.7,438.6 787.3,438.1Z" fill="#a6d3d4"/>
<path d="M736.9,405.9 736.9,417.4 746.8,417.4 746.8,423.8 750.9,420.4 753.6,418.3 756.6,419.5 759.0,417.6 762.4,418.9 763.6,422.3 762.6,424.7 757.6,420.6 752.6,429.1 749.2,432.7 745.2,431.2 741.8,438.5 739.0,442.7 739.0,444.5 733.2,446.9 730.1,447.5 725.8,448.1 723.0,444.1 721.3,443.9 718.9,440.3 717.0,436.4 717.0,433.4 718.4,433.4 720.8,431.2 720.8,428.5 722.7,426.0 725.1,427.1 725.1,425.1 726.9,423.0 728.0,421.4 730.4,421.6 733.5,418.3 734.9,413.0 735.9,409.4 735.6,406.6 736.9,405.9Z" fill="#c4e4db"/>
<path d="M746.8,417.4 782.0,417.4 782.9,432.9 789.1,433.0 788.6,434.9 787.3,438.1 783.7,438.6 781.0,439.1 779.6,434.9 777.2,431.8 778.1,428.7 778.1,425.1 780.0,421.4 779.6,419.5 777.2,422.0 775.3,423.8 775.7,426.9 775.3,431.2 776.2,434.9 777.0,438.0 774.3,436.7 771.0,435.5 770.2,434.2 767.6,433.0 770.0,430.0 770.1,428.1 768.1,426.7 765.7,425.1 763.6,422.3 762.4,418.9 759.0,417.6 756.6,419.5 753.6,418.3 750.9,420.4 746.8,423.8 746.8,417.4Z" fill="#baded8"/>
<path d="M782.0,417.4 783.9,416.0 785.6,416.4 784.1,418.9 784.8,422.6 785.8,425.7 788.6,429.0 789.1,433.0 782.9,432.9 782.0,417.4Z" fill="#b8ddd8"/>
<path d="M736.9,388.8 740.9,386.7 744.1,385.1 744.1,388.6 786.2,388.6 789.1,393.7 792.5,396.8 788.3,401.6 787.7,405.8 789.1,408.9 792.0,411.4 788.3,415.2 785.6,416.4 783.9,416.0 782.0,417.4 746.8,417.4 736.9,417.4 736.9,405.9 736.9,388.8Z" fill="#94c9d0"/>
<path d="M800.1,401.3 792.5,396.8 788.3,401.6 787.7,405.8 789.1,408.9 792.0,411.4 788.3,415.2 785.6,416.4 784.3,418.9 784.8,420.7 788.6,423.8 790.3,427.1 795.3,421.4 798.2,417.0 798.7,412.7 799.1,408.0 796.7,407.6 798.9,405.1 800.1,401.3Z" fill="#b4dbd7"/>
<path d="M744.1,385.1 748.0,382.1 752.3,377.6 750.9,372.4 760.9,370.8 764.7,372.4 771.4,372.1 775.3,369.5 778.1,368.4 778.1,363.8 776.7,360.7 781.9,356.5 784.8,353.1 790.5,349.1 805.3,348.9 805.3,359.1 804.9,367.8 806.3,367.8 806.1,378.9 803.9,387.9 803.4,397.5 804.1,398.7 801.7,400.1 802.4,401.5 801.0,403.6 799.8,403.9 798.9,405.1 800.1,401.3 792.5,396.8 789.1,393.7 786.2,388.6 744.1,388.6 744.1,385.1Z" fill="#589ab4"/>
<path d="M805.3,348.9 823.0,348.9 822.1,355.8 817.8,361.1 816.3,366.4 813.9,375.6 813.0,379.2 806.1,378.9 806.3,367.8 804.9,367.8 805.3,359.1 805.3,348.9Z" fill="#c0e2da"/>
<path d="M823.0,348.9 824.0,346.4 827.0,345.0 827.8,358.5 828.0,370.4 829.5,373.0 830.7,374.7 829.5,377.3 827.8,377.3 825.4,379.2 813.0,379.2 813.9,375.6 816.3,366.4 817.8,361.1 822.1,355.8 823.0,348.9Z" fill="#c1e3da"/>
<path d="M827.0,345.0 829.2,345.7 829.7,343.6 833.5,338.9 835.0,336.1 834.5,332.7 836.9,329.6 837.4,325.7 844.8,315.1 846.4,317.3 847.9,319.0 850.7,318.0 853.3,316.5 856.9,319.3 858.5,320.6 858.6,336.3 858.8,338.2 861.9,341.3 861.7,345.0 863.3,346.6 866.2,350.4 866.5,351.6 862.2,354.5 857.4,357.1 854.5,358.5 850.7,359.1 848.8,356.5 846.9,359.8 845.9,361.8 842.1,364.5 839.3,365.8 835.0,367.1 834.0,369.7 831.6,374.3 830.7,374.7 829.5,373.0 828.0,370.4 827.8,358.5 827.0,345.0Z" fill="#c4e4db"/>
<path d="M806.1,378.9 813.0,379.2 825.4,379.2 827.8,377.3 829.5,377.3 831.6,380.1 828.8,382.1 827.8,384.1 830.7,386.0 831.1,389.2 832.6,391.5 837.4,391.4 836.9,388.6 835.4,387.7 837.8,389.9 838.0,392.8 834.5,393.3 831.1,394.7 830.7,392.4 827.8,394.7 826.7,395.0 825.9,392.4 824.2,389.9 824.2,388.3 820.2,388.3 803.9,387.9 806.1,378.9Z" fill="#b7ddd8"/>
<path d="M820.2,388.3 824.2,388.3 824.2,389.9 825.9,392.4 826.7,395.0 824.5,395.0 824.0,393.1 823.5,395.6 823.2,396.8 819.6,397.3 820.2,388.3Z" fill="#baded8"/>
<path d="M803.9,387.9 820.2,388.3 819.6,397.3 817.3,397.5 809.6,398.2 806.8,399.4 802.4,401.5 801.7,400.1 804.1,398.7 803.4,397.5 803.9,387.9Z" fill="#bee1d9"/>
<path d="M798.8,406.4 801.5,406.6 805.8,406.0 813.5,403.6 819.6,400.5 817.3,401.3 815.4,401.3 816.0,399.3 812.5,401.7 807.7,402.0 803.9,402.4 801.3,403.9 799.6,404.9Z" fill="#589ab4"/>
</g>
<path d="M319.5,388.6 320.5,395.0 320.1,400.7 317.7,408.4 321.0,413.9 323.4,420.1 324.4,426.9 330.1,433.6 331.2,438.5 335.8,440.9 335.8,444.5 336.8,448.1 340.6,451.1 342.5,452.9 341.1,455.9 344.4,461.2 347.3,466.5 351.6,470.1 353.5,473.0 353.8,479.4 355.2,480.5 362.6,481.1 366.9,484.0 371.2,485.5 374.0,485.7 375.0,488.6 377.9,489.2 382.6,492.6 385.5,497.2 386.0,500.6 387.2,502.5 410.1,500.4 412.2,497.2 410.3,492.6 412.2,486.9 415.6,482.6 412.7,477.6 411.0,474.2 359.7,426.3 359.7,388.6 319.5,388.6Z" fill="#517598" stroke="#000" stroke-width="1.55" stroke-linejoin="round"/>
<path d="M334.9,303.1 337.3,306.7 338.2,308.8 336.8,313.1 337.3,315.9 335.3,318.0 332.0,320.4 330.6,318.8 333.4,317.3 334.9,313.8 333.4,311.7 335.8,308.8 333.9,308.1 331.5,313.1 329.6,316.2 331.0,316.6 333.0,311.0 333.4,305.3" fill="none" stroke="#6c7574" stroke-width=".9" stroke-linejoin="round"/>
<path d="M335.8,440.7 337.3,437.9 339.6,437.9 337.7,439.7 338.7,443.3 340.1,445.1 337.3,442.7Z" fill="#fff" stroke="#000" stroke-width="1.1"/>
<path d="M355.4,485.4 359.7,485.7 364.0,485.2 360.7,486.3Z" fill="#000" stroke="#000" stroke-width="1.9" stroke-linejoin="round"/>
<path d="M373.1,491.7 375.9,493.4 375.5,492.4Z" fill="#000" stroke="#000" stroke-width="1.9" stroke-linejoin="round"/>
<path d="M364.0,494.0 365.2,494.7Z" fill="#000" stroke="#000" stroke-width="1.9" stroke-linejoin="round"/>
<path d="M373.1,496.9 375.5,499.3Z" fill="#000" stroke="#000" stroke-width="1.9" stroke-linejoin="round"/>
<path d="M738.0,583.6 733.2,586.8 728.4,588.4 724.6,589.4" fill="none" stroke="#7c8584" stroke-width=".8" stroke-dasharray="1.5 1"/>
<g font-family="Liberation Sans,Noto Sans CJK JP,sans-serif">
<text x="355.9" y="316.7" font-size="7.4" fill="#2a5a5a" letter-spacing="0.8" text-anchor="middle" opacity="0.105">ワシントン</text>
<text x="457.0" y="324.0" font-size="7.4" fill="#2a5a5a" letter-spacing="0.8" text-anchor="middle" opacity="0.105">モンタナ</text>
<text x="550.2" y="313.2" font-size="7.4" fill="#2a5a5a" letter-spacing="0.8" text-anchor="middle" opacity="0.105">ノース</text>
<text x="550.2" y="322.0" font-size="7.4" fill="#2a5a5a" letter-spacing="0.8" text-anchor="middle" opacity="0.105">ダコタ</text>
<text x="354.5" y="365.1" font-size="7.4" fill="#2a5a5a" letter-spacing="0.8" text-anchor="middle" opacity="0.105">オレゴン</text>
<text x="411.6" y="363.9" font-size="7.4" fill="#2a5a5a" letter-spacing="0.8" text-anchor="middle" opacity="0.105">アイダホ</text>
<text x="479.0" y="373.3" font-size="7.4" fill="#2a5a5a" letter-spacing="0.8" text-anchor="middle" opacity="0.105">ワイオ</text>
<text x="479.0" y="382.1" font-size="7.4" fill="#2a5a5a" letter-spacing="0.8" text-anchor="middle" opacity="0.105">ミング</text>
<text x="547.8" y="354.2" font-size="7.4" fill="#2a5a5a" letter-spacing="0.8" text-anchor="middle" opacity="0.105">サウス</text>
<text x="547.8" y="363.0" font-size="7.4" fill="#2a5a5a" letter-spacing="0.8" text-anchor="middle" opacity="0.105">ダコタ</text>
<text x="552.2" y="397.3" font-size="7.4" fill="#2a5a5a" letter-spacing="0.8" text-anchor="middle" opacity="0.105">ネブラスカ</text>
<text x="564.8" y="435.4" font-size="7.4" fill="#2a5a5a" letter-spacing="0.8" text-anchor="middle" opacity="0.105">カンザス</text>
<text x="390.5" y="426.0" font-size="7.4" fill="#2a5a5a" letter-spacing="0.8" text-anchor="middle" opacity="0.105">ネバダ</text>
<text x="438.0" y="426.0" font-size="7.4" fill="#2a5a5a" letter-spacing="0.8" text-anchor="middle" opacity="0.105">ユタ</text>
<text x="498.0" y="428.9" font-size="7.4" fill="#2a5a5a" letter-spacing="0.8" text-anchor="middle" opacity="0.105">コロラド</text>
<text x="360.3" y="445.7" font-size="7.4" fill="#0f2a48" letter-spacing="0.8" text-anchor="middle" opacity="0.3">カリフォ</text>
<text x="360.3" y="454.4" font-size="7.4" fill="#0f2a48" letter-spacing="0.8" text-anchor="middle" opacity="0.3">ルニア</text>
<text x="605.7" y="335.2" font-size="7.4" fill="#2a5a5a" letter-spacing="0.8" text-anchor="middle" opacity="0.105">ミネソタ</text>
<text x="612.6" y="391.3" font-size="7.4" fill="#2a5a5a" letter-spacing="0.8" text-anchor="middle" opacity="0.105">アイオワ</text>
<text x="646.8" y="354.1" font-size="7.4" fill="#2a5a5a" letter-spacing="0.8" text-anchor="middle" opacity="0.105">ウィスコ</text>
<text x="646.8" y="362.9" font-size="7.4" fill="#2a5a5a" letter-spacing="0.8" text-anchor="middle" opacity="0.105">ンシン</text>
<text x="650.0" y="417.2" font-size="7.4" fill="#2a5a5a" letter-spacing="0.8" text-anchor="middle" opacity="0.105">イリノイ</text>
<text x="622.3" y="438.2" font-size="7.4" fill="#2a5a5a" letter-spacing="0.8" text-anchor="middle" opacity="0.105">ミズーリ</text>
<text x="574.5" y="471.1" font-size="7.4" fill="#2a5a5a" letter-spacing="0.8" text-anchor="middle" opacity="0.105">オクラホマ</text>
<text x="622.3" y="475.4" font-size="7.4" fill="#2a5a5a" letter-spacing="0.8" text-anchor="middle" opacity="0.105">アーカ</text>
<text x="622.3" y="483.7" font-size="7.4" fill="#2a5a5a" letter-spacing="0.8" text-anchor="middle" opacity="0.105">ンソー</text>
<text x="557.9" y="519.5" font-size="7.4" fill="#2a5a5a" letter-spacing="0.8" text-anchor="middle" opacity="0.105">テキサス</text>
<text x="624.3" y="526.1" font-size="7.4" fill="#2a5a5a" letter-spacing="0.8" text-anchor="middle" opacity="0.105">ルイジアナ</text>
<text x="697.9" y="377.7" font-size="7.4" fill="#2a5a5a" letter-spacing="0.8" text-anchor="middle" opacity="0.105">ミシガン</text>
<text x="712.5" y="412.9" font-size="7.4" fill="#2a5a5a" letter-spacing="0.8" text-anchor="middle" opacity="0.105">オハイオ</text>
<text x="761.3" y="401.6" font-size="7.4" fill="#2a5a5a" letter-spacing="0.8" text-anchor="middle" opacity="0.105">ペンシル</text>
<text x="761.3" y="410.4" font-size="7.4" fill="#2a5a5a" letter-spacing="0.8" text-anchor="middle" opacity="0.105">ベニア</text>
<text x="784.8" y="374.7" font-size="7.4" fill="#2a5a5a" letter-spacing="0.8" text-anchor="middle" opacity="0.105">ニュー</text>
<text x="784.8" y="383.1" font-size="7.4" fill="#2a5a5a" letter-spacing="0.8" text-anchor="middle" opacity="0.105">ヨーク</text>
<text x="844.6" y="344.9" font-size="7.4" fill="#2a5a5a" letter-spacing="0.8" text-anchor="middle" opacity="0.105">メイン</text>
<text x="734.0" y="429.1" font-size="7.4" fill="#2a5a5a" letter-spacing="0.8" text-anchor="middle" opacity="0.105">ウェストバ</text>
<text x="734.0" y="437.9" font-size="7.4" fill="#2a5a5a" letter-spacing="0.8" text-anchor="middle" opacity="0.105">ージニア</text>
<text x="695.9" y="438.7" font-size="7.4" fill="#2a5a5a" letter-spacing="0.8" text-anchor="middle" opacity="0.105">ケンタ</text>
<text x="695.9" y="448.6" font-size="7.4" fill="#2a5a5a" letter-spacing="0.8" text-anchor="middle" opacity="0.105">ッキー</text>
<text x="682.2" y="467.7" font-size="7.4" fill="#2a5a5a" letter-spacing="0.8" text-anchor="middle" opacity="0.105">テネシー</text>
<text x="742.8" y="466.2" font-size="7.4" fill="#2a5a5a" letter-spacing="0.8" text-anchor="middle" opacity="0.105">ノースカ</text>
<text x="742.8" y="475.4" font-size="7.4" fill="#2a5a5a" letter-spacing="0.8" text-anchor="middle" opacity="0.105">ロライナ</text>
<text x="677.3" y="502.3" font-size="7.4" fill="#2a5a5a" letter-spacing="0.8" text-anchor="middle" opacity="0.105">アラバマ</text>
<text x="727.0" y="549.7" font-size="7.4" fill="#2a5a5a" letter-spacing="0.8" text-anchor="middle" opacity="0.105">フロリダ</text>
<text x="561.9" y="416.8" font-size="10.5" fill="#2a5a5a" letter-spacing="0.5" text-anchor="middle" opacity="0.11">米国</text>
<text x="310.5" y="194.4" font-size="7.2" fill="#8c8c8c" letter-spacing="0.5" text-anchor="middle" opacity="1">ブリティ</text>
<text x="310.5" y="203.4" font-size="7.2" fill="#8c8c8c" letter-spacing="0.5" text-anchor="middle" opacity="1">ッシュコ</text>
<text x="310.5" y="212.3" font-size="7.2" fill="#8c8c8c" letter-spacing="0.5" text-anchor="middle" opacity="1">ロンビア</text>
<text x="413.0" y="228.6" font-size="7.2" fill="#8c8c8c" letter-spacing="0.5" text-anchor="middle" opacity="1">アルバータ</text>
<text x="497.5" y="206.1" font-size="7.2" fill="#8c8c8c" letter-spacing="0.5" text-anchor="middle" opacity="1">サスカチ</text>
<text x="497.5" y="216.1" font-size="7.2" fill="#8c8c8c" letter-spacing="0.5" text-anchor="middle" opacity="1">ュワン</text>
<text x="578.0" y="202.1" font-size="7.2" fill="#8c8c8c" letter-spacing="0.5" text-anchor="middle" opacity="1">マニトバ</text>
<text x="696.0" y="267.1" font-size="7.2" fill="#8c8c8c" letter-spacing="0.5" text-anchor="middle" opacity="1">オンタリオ</text>
<text x="812.5" y="234.1" font-size="7.2" fill="#8c8c8c" letter-spacing="0.5" text-anchor="middle" opacity="1">ケベック</text>
<text x="897.0" y="343.6" font-size="7.2" fill="#8c8c8c" letter-spacing="0.5" text-anchor="middle" opacity="1">ノバス</text>
<text x="897.0" y="355.6" font-size="7.2" fill="#8c8c8c" letter-spacing="0.5" text-anchor="middle" opacity="1">コシア</text>
<text x="534.5" y="610.0" font-size="9.6" fill="#7d7d7d" letter-spacing="1" text-anchor="middle" opacity="1">メキシコ</text>
</g>
<path d="M287.5,153.0V724.2M287.0,153.5H893.6" stroke="#fff" stroke-width="1" opacity=".4" fill="none"/>
</g></svg>
<div class="a" style="left:288.5px;top:711.6px;width:132px;height:12.6px;background:rgba(246,246,246,.85)"></div>

<!-- legend -->
<div class="a" style="left:903px;top:120px;width:116px;height:52px;background:#fff;border:1px solid #e2e2e2"></div>
<div class="a" style="left:904px;top:121px;width:114px;height:21px;background:#f9f9f9"></div>
<div class="a" style="left:907px;top:145.5px;width:108px;height:11.5px;border:1px solid #c9c3bb;background:linear-gradient(90deg,#bce4d8 0%,#95cecf 16%,#72bac6 32%,#4ba5ba 48%,#3b96b2 58%,#3586a7 69%,#32779b 79%,#2f6790 90%,#2c5985 100%)"></div>
<!-- bottom tab bar / status bar -->
<div class="a" style="left:0;top:734px;width:1024px;height:23px;background:#e6e6e6;border-top:1px solid #cfcfcf"></div>
<div class="a" style="left:297px;top:734px;width:41px;height:23px;background:#fff;border-left:1px solid #cfcfcf;border-right:1px solid #cfcfcf"></div>
<div class="a" style="left:0;top:757px;width:1024px;height:16px;background:#f0f0f0;border-top:1px solid #d9d9d9"></div>
<!-- window border -->
<div class="a" style="left:0;top:0;width:1024px;height:773px;box-shadow:inset 0 0 0 1px #757575;pointer-events:none;z-index:50"></div>
<svg style="left:934px;top:10.8px" width="8" height="1" viewBox="0 0 8 1" ><rect width="8" height="1" fill="#222"/></svg>
<svg style="left:967.5px;top:7px" width="8" height="8" viewBox="0 0 8 8" ><rect x=".5" y=".5" width="7" height="7" rx=".8" fill="none" stroke="#222" stroke-width="1"/></svg>
<svg style="left:1002px;top:7px" width="8" height="8" viewBox="0 0 8 8" ><path d="M.3,.3L7.7,7.7M7.7,.3L.3,7.7" stroke="#222" stroke-width="1" fill="none"/></svg>
<svg style="left:7px;top:5px" width="13" height="13" viewBox="0 0 13 13" ><rect x=".5" y=".5" width="12" height="12" fill="#f4f8fc" stroke="#c9d3de" stroke-width=".6"/><g stroke="#2f6ea8" stroke-width="1" fill="none"><path d="M6.5,2.2v8.6M2.2,6.5h8.6"/><path d="M3.6,2.6v2M2.6,3.6h2M9.4,2.6v2M8.4,3.6h2M3.6,8.4v2M2.6,9.4h2M9.4,8.4v2M8.4,9.4h2" stroke-width=".7"/></g></svg>
<svg style="left:12px;top:47px" width="13.5" height="13.5" viewBox="0 0 16 16" ><g fill="none" stroke-width="1.3"><path d="M8,4.6v6.8M4.6,8h6.8" stroke="#e8762d"/><path d="M8,0.3v3M6.7,1.8h2.6" stroke="#5b879b" stroke-width=".9"/><path d="M8,12.7v3M6.7,14.2h2.6" stroke="#5b879b" stroke-width=".9"/><path d="M1.8,6.5v3M0.3,8h3" stroke="#7099a6" stroke-width=".9"/><path d="M14.2,6.5v3M12.7,8h3" stroke="#7099a6" stroke-width=".9"/><path d="M3.6,1.9v3.4M1.9,3.6h3.4" stroke="#c72035" stroke-width="1"/><path d="M12.4,1.9v3.4M10.7,3.6h3.4" stroke="#1f447e" stroke-width="1"/><path d="M3.6,10.7v3.4M1.9,12.4h3.4" stroke="#eb9129" stroke-width="1"/><path d="M12.4,10.7v3.4M10.7,12.4h3.4" stroke="#c72035" stroke-width="1"/></g></svg>
<div class="vd" style="left:36.5px;top:43px;height:23px;background:#dcdcdc"></div>
<svg style="left:47px;top:48px" width="13" height="11" viewBox="0 0 13 11" ><path d="M12.5,5.5H1.5M6,1L1.3,5.5L6,10" fill="none" stroke="#595959" stroke-width="1.5"/></svg>
<svg style="left:70px;top:48px" width="13" height="11" viewBox="0 0 13 11" ><path d="M.5,5.5H11.5M7,1L11.7,5.5L7,10" fill="none" stroke="#595959" stroke-width="1.5"/></svg>
<svg style="left:93.5px;top:49px" width="14" height="9" viewBox="0 0 14 9" ><path d="M3,3.5H11.5A2.5,2.5 0 0 1 11.5,8.5H2.8A2.5,2.5 0 0 1 2.8,3.5M8.5,1L11,3.5L8.5,6" fill="none" stroke="#c4c4c4" stroke-width="1.1"/></svg>
<svg style="left:113.25px;top:52.65px" width="4.5" height="2.7" viewBox="0 0 5 3" ><path d="M0,0H5L2.5,3Z" fill="#c9c9c9"/></svg>
<svg style="left:125px;top:47.5px" width="12" height="12" viewBox="0 0 12 12" ><path d="M.6,.6H11.4V11.4H.6Z" fill="none" stroke="#595959" stroke-width="1.2"/><rect x="3" y="7" width="6" height="4.4" fill="#595959"/><rect x="4.3" y="8.6" width="1.6" height="2.2" fill="#f5f5f5"/></svg>
<svg style="left:149px;top:46.5px" width="14" height="15" viewBox="0 0 14 15" ><path d="M1,2.5C1,0.6 8,0.6 8,2.5V9.5C8,11.4 1,11.4 1,9.5Z M1,2.5C1,4.4 8,4.4 8,2.5" fill="none" stroke="#666" stroke-width="1"/><rect x="5.5" y="7" width="8" height="8" fill="#f5f5f5"/><path d="M9.7,8v6M6.7,11h6" stroke="#222" stroke-width="1.4"/></svg>
<svg style="left:173px;top:46.5px" width="14" height="15" viewBox="0 0 14 15" ><path d="M1,2.5C1,0.6 8,0.6 8,2.5V9.5C8,11.4 1,11.4 1,9.5Z M1,2.5C1,4.4 8,4.4 8,2.5" fill="none" stroke="#666" stroke-width="1"/><rect x="5.5" y="7.5" width="7" height="7" fill="#f5f5f5"/><path d="M7.7,8.5v5.5M10.5,8.5v5.5" stroke="#222" stroke-width="1.4"/></svg>
<svg style="left:190.5px;top:52.5px" width="5" height="3" viewBox="0 0 5 3" ><path d="M0,0H5L2.5,3Z" fill="#555"/></svg>
<svg style="left:200.5px;top:47.5px" width="13" height="12" viewBox="0 0 13 12" ><path d="M11.5,5A5,4.6 0 0 0 2,3.6M1.5,7A5,4.6 0 0 0 11,8.4" fill="none" stroke="#c4c4c4" stroke-width="1.1"/><path d="M.8,1.2L2,4.2L5,3.4M12.2,10.8L11,7.8L8,8.6" fill="none" stroke="#c4c4c4" stroke-width="1"/></svg>
<svg style="left:220.25px;top:52.65px" width="4.5" height="2.7" viewBox="0 0 5 3" ><path d="M0,0H5L2.5,3Z" fill="#c9c9c9"/></svg>
<div class="vd" style="left:232.5px;top:43px;height:23px;background:#dcdcdc"></div>
<svg style="left:241px;top:47px" width="15" height="15" viewBox="0 0 15 15" ><rect x=".6" y=".6" width="10.8" height="10.8" fill="none" stroke="#666" stroke-width="1.1"/><path d="M3.2,9.5V6.5M5.6,9.5V3M8,9.5V5" stroke="#666" stroke-width="1.3"/><rect x="7.5" y="7.5" width="8" height="8" fill="#f5f5f5"/><path d="M11.5,8.3v6.4M8.3,11.5h6.4" stroke="#222" stroke-width="1.5"/></svg>
<svg style="left:260.5px;top:52.5px" width="5" height="3" viewBox="0 0 5 3" ><path d="M0,0H5L2.5,3Z" fill="#555"/></svg>
<svg style="left:272px;top:46.5px" width="15" height="13" viewBox="0 0 15 13" ><rect x="5.5" y=".5" width="8" height="7" fill="none" stroke="#aaa"/><rect x=".5" y="5.5" width="8" height="7" fill="#f5f5f5" stroke="#aaa"/><path d="M2.5,11V9M4.5,11V8M6.5,11V9.5M8,6V4M10,6V2.5M12,6V3.5" stroke="#aaa" stroke-width="1"/></svg>
<svg style="left:295px;top:47px" width="15" height="15" viewBox="0 0 15 15" ><rect x=".6" y=".6" width="10.8" height="10.8" fill="none" stroke="#666" stroke-width="1.1"/><path d="M3.2,9.5V6.5M5.6,9.5V3M8,9.5V5" stroke="#666" stroke-width="1.3"/><rect x="7.5" y="7.5" width="8" height="8" fill="#f5f5f5"/><path d="M8.8,8.8L14.4,14.4M14.4,8.8L8.8,14.4" stroke="#222" stroke-width="1.6"/></svg>
<svg style="left:315px;top:52.5px" width="5" height="3" viewBox="0 0 5 3" ><path d="M0,0H5L2.5,3Z" fill="#555"/></svg>
<div class="vd" style="left:326.5px;top:43px;height:23px;background:#dcdcdc"></div>
<svg style="left:336px;top:47px" width="14" height="13" viewBox="0 0 14 13" ><g fill="none" stroke="#666" stroke-width="1"><rect x=".5" y=".5" width="2.6" height="2.6"/><rect x=".5" y="4.7" width="2.6" height="2.6"/><rect x=".5" y="8.9" width="2.6" height="2.6"/><rect x="4.7" y=".5" width="2.6" height="2.6"/><rect x="8.9" y=".5" width="2.6" height="2.6"/><path d="M12.5,5.5C12.5,9.5 10,11.5 5.5,11.5" stroke="#444" stroke-width="1.2"/><path d="M10.8,7L12.6,5L14,7.2M7.6,9.8L5.3,11.5L7.6,13" stroke="#444" stroke-width="1.1"/></g></svg>
<svg style="left:360px;top:47px" width="14" height="12" viewBox="0 0 14 12" ><g fill="none" stroke="#b9b9b9" stroke-width="1"><path d="M2.5,0V10.5M.3,8L2.5,10.8L4.7,8"/><rect x="6.5" y=".5" width="3" height="3"/><rect x="6.5" y="4.5" width="5" height="2.6"/><rect x="6.5" y="8" width="7" height="2.6"/></g></svg>
<svg style="left:384px;top:47px" width="14" height="12" viewBox="0 0 14 12" ><g fill="none" stroke="#b9b9b9" stroke-width="1"><path d="M2.5,0V10.5M.3,8L2.5,10.8L4.7,8"/><rect x="6.5" y=".5" width="7" height="2.6"/><rect x="6.5" y="4.2" width="5" height="2.6"/><rect x="6.5" y="8" width="3" height="3"/></g></svg>
<div class="vd" style="left:409.5px;top:43px;height:23px;background:#dcdcdc"></div>
<svg style="left:421px;top:46.5px" width="11" height="15" viewBox="0 0 11 15" ><path d="M7.5,.8L9.8,2L5.2,10.2L2.6,10.6L2.9,9Z" fill="none" stroke="#444" stroke-width="1.1"/><path d="M.5,13.5H9.5" stroke="#333" stroke-width="1.6"/></svg>
<svg style="left:437px;top:52.5px" width="5" height="3" viewBox="0 0 5 3" ><path d="M0,0H5L2.5,3Z" fill="#555"/></svg>
<svg style="left:449px;top:47px" width="11" height="13" viewBox="0 0 11 13" ><path d="M8.6,2.6L3.4,9.8A1.4,1.4 0 0 0 5.6,11.4L10,5.2A2.3,2.3 0 0 0 6.2,2.4L1.6,8.8" fill="none" stroke="#c4c4c4" stroke-width="1" transform="rotate(8 5 6)"/></svg>
<svg style="left:467.25px;top:52.65px" width="4.5" height="2.7" viewBox="0 0 5 3" ><path d="M0,0H5L2.5,3Z" fill="#cfcfcf"/></svg>
<svg style="left:479px;top:47.5px" width="13" height="12" viewBox="0 0 13 12" ><rect x=".5" y=".5" width="12" height="11" fill="none" stroke="#888" stroke-width=".9" stroke-dasharray="1.2 1"/><text x="6.5" y="9.6" font-family="Liberation Serif,serif" font-size="9.5" text-anchor="middle" fill="#333">T</text></svg>
<svg style="left:503px;top:47px" width="11" height="13" viewBox="0 0 11 13" ><path d="M6.6,.8L10,3.6L8.6,4.6L7.4,8.4L4.6,8.6L2,5.6L4.6,4L5.6,1.6ZM3.4,7.4L.8,11.8" fill="none" stroke="#444" stroke-width="1" stroke-linejoin="round"/></svg>
<div class="a" style="left:528px;top:45px;width:85px;height:17px;border:1px solid #d9d9d9;border-radius:2px;background:#f7f7f7"></div>
<svg style="left:603.25px;top:52.65px" width="4.5" height="2.7" viewBox="0 0 5 3" ><path d="M0,0H5L2.5,3Z" fill="#c9c9c9"/></svg>
<div class="vd" style="left:624.5px;top:43px;height:23px;background:#dcdcdc"></div>
<svg style="left:633px;top:47px" width="15" height="12" viewBox="0 0 15 12" ><g fill="none" stroke="#555" stroke-width="1"><rect x=".5" y=".5" width="2.6" height="2.4"/><rect x=".5" y="4.3" width="2.6" height="2.4"/><rect x=".5" y="8.1" width="2.6" height="2.4"/><rect x="4.6" y=".5" width="9.9" height="10"/><path d="M7,8.8V6M9.4,8.8V3M11.8,8.8V5" stroke-width="1.3"/></g></svg>
<svg style="left:652px;top:52.5px" width="5" height="3" viewBox="0 0 5 3" ><path d="M0,0H5L2.5,3Z" fill="#555"/></svg>
<svg style="left:664px;top:47px" width="14" height="13" viewBox="0 0 14 13" ><g fill="none" stroke="#444" stroke-width="1.1"><path d="M0,1H14" stroke-width="1.4"/><rect x="1.5" y="1.5" width="11" height="7"/><path d="M7,8.5V12M4,12.3H10"/></g></svg>
<div class="vd" style="left:688.5px;top:43px;height:23px;background:#dcdcdc"></div>
<svg style="left:700px;top:47.5px" width="12" height="12" viewBox="0 0 12 12" ><g fill="none" stroke="#333" stroke-width="1.1"><circle cx="2.6" cy="6" r="1.9"/><circle cx="9.2" cy="2.4" r="1.9"/><circle cx="9.2" cy="9.6" r="1.9"/><path d="M4.3,5.1L7.5,3.3M4.3,6.9L7.5,8.7"/></g></svg>
<svg style="left:896.5px;top:46.5px" width="14" height="14" viewBox="0 0 14 14" ><g fill="none" stroke="#c6c6c6" stroke-width="1"><circle cx="7" cy="8" r="5.6"/><path d="M2.6,3.2L1.4,1.4M11.4,3.2L12.6,1.4M4,7.5C5,6.4 6,6.4 6.6,7.5M7.6,7.5C8.4,6.4 9.4,6.4 10.2,7.5M4.6,10.4H9.4"/></g></svg>
<svg style="left:921px;top:46.5px" width="14" height="14" viewBox="0 0 14 14" ><g fill="none" stroke="#777" stroke-width="1.1"><path d="M1,1.5H10.5L13,4L10.5,6.5H1Z"/><path d="M6.5,6.5V12.5M4.2,12.8H8.8"/></g></svg>
<svg style="left:948px;top:48px" width="11" height="11" viewBox="0 0 11 11" ><rect x="0" y="0" width="8" height="1.9" fill="#7b5c8e"/><rect x="0" y="3" width="11" height="1.9" fill="#5b8cc1"/><rect x="0" y="6" width="4" height="1.9" fill="#f0a04a"/><rect x="0" y="9" width="6" height="1.9" fill="#e15a6b"/></svg>
<svg style="left:148px;top:75.3px" width="4.4" height="7" viewBox="0 0 4.4 7" ><path d="M4,.4L.7,3.5L4,6.6" fill="none" stroke="#666" stroke-width="1"/></svg>
<svg style="left:15.5px;top:94px" width="13" height="12" viewBox="0 0 13 12" ><g fill="none" stroke="#777" stroke-width=".9"><path d="M1,2C1,.4 7.5,.4 7.5,2V5M1,2V8.5C1,9.6 3,10 4,10M1,2C1,3.4 7.5,3.4 7.5,2M1,5.2C1,6.4 4,6.6 5,6.4"/><path d="M4.5,4.2C4.5,3 10.5,3 10.5,4.2V7M4.5,4.2V9.6C4.5,10.6 6.5,10.9 7.2,10.9M4.5,4.2C4.5,5.5 10.5,5.5 10.5,4.2"/></g><circle cx="9.8" cy="9.3" r="2.5" fill="#2e7fa6"/><path d="M8.6,9.3L9.5,10.2L11,8.5" stroke="#fff" stroke-width=".7" fill="none"/></svg>
<svg style="left:91px;top:121.5px" width="8" height="9" viewBox="0 0 8 9" ><circle cx="4.8" cy="3.2" r="2.6" fill="none" stroke="#666" stroke-width="1"/><path d="M3,5.2L.6,8.2" stroke="#666" stroke-width="1.1"/></svg>
<svg style="left:107px;top:121px" width="11" height="10" viewBox="0 0 11 10" ><path d="M.6,.6H10.4L6.4,5V9.3H4.6V5Z" fill="none" stroke="#6e6e6e" stroke-width=".9"/></svg>
<svg style="left:126px;top:122px" width="10" height="8" viewBox="0 0 10 8" ><g fill="#8a8a8a"><rect x="0" y="0" width="2" height="1.6"/><rect x="3" y="0" width="3" height="1.6"/><rect x="7" y="0" width="3" height="1.6"/><rect x="0" y="3" width="2" height="1.6"/><rect x="3" y="3" width="3" height="1.6"/><rect x="7" y="3" width="3" height="1.6"/><rect x="0" y="6" width="2" height="1.6"/><rect x="3" y="6" width="3" height="1.6"/><rect x="7" y="6" width="3" height="1.6"/></g></svg>
<svg style="left:142.95px;top:125.15px" width="4.5" height="2.7" viewBox="0 0 5 3" ><path d="M0,0H5L2.5,3Z" fill="#555"/></svg>
<span class="t" style="left:16.3px;top:165.7px;font-size:7.3px;color:#3f87ab;letter-spacing:0">Abc</span>
<svg style="left:18px;top:176.65px" width="8.6" height="8.6" viewBox="0 0 8.6 8.6" ><g fill="none" stroke="#3f87ab" stroke-width="1"><circle cx="4.3" cy="4.3" r="3.8"/><ellipse cx="4.3" cy="4.3" rx="1.7" ry="3.8"/><path d="M.5,4.3H8.1"/></g></svg>
<svg style="left:18px;top:192.35px" width="8.6" height="8.6" viewBox="0 0 8.6 8.6" ><g fill="none" stroke="#3f87ab" stroke-width="1"><circle cx="4.3" cy="4.3" r="3.8"/><ellipse cx="4.3" cy="4.3" rx="1.7" ry="3.8"/><path d="M.5,4.3H8.1"/></g></svg>
<span class="t" style="left:16.3px;top:212.8px;font-size:7.3px;color:#3f87ab;letter-spacing:0">Abc</span>
<span class="t" style="left:16.3px;top:228.4px;font-size:7.3px;color:#3f87ab;letter-spacing:0">Abc</span>
<svg style="left:18px;top:239.45px" width="8.6" height="8.6" viewBox="0 0 8.6 8.6" ><g fill="none" stroke="#3f87ab" stroke-width="1"><rect x=".5" y="1.5" width="7.6" height="6.6"/><path d="M.5,3.6H8.1M2.6,.3V2M6,.3V2"/></g></svg>
<span class="t" style="left:16.3px;top:259.9px;font-size:7.3px;color:#3f87ab;letter-spacing:0">Abc</span>
<svg style="left:18px;top:270.85px" width="8.6" height="8.6" viewBox="0 0 8.6 8.6" ><g fill="none" stroke="#3f87ab" stroke-width="1"><circle cx="4.3" cy="4.3" r="3.8"/><ellipse cx="4.3" cy="4.3" rx="1.7" ry="3.8"/><path d="M.5,4.3H8.1"/></g></svg>
<span class="t" style="left:16.3px;top:291.2px;font-size:7.3px;color:#3f87ab;letter-spacing:0">Abc</span>
<span class="t" style="left:16.3px;top:306.9px;font-size:7.3px;color:#3f87ab;letter-spacing:0">Abc</span>
<span class="t" style="left:16.3px;top:322.6px;font-size:7.3px;color:#3f87ab;letter-spacing:0">Abc</span>
<svg style="left:18.5px;top:333.85px" width="8" height="8" viewBox="0 0 8 8" ><path d="M2.6,0V8M5.4,0V8M0,2.6H8M0,5.4H8" fill="none" stroke="#3f87ab" stroke-width=".9"/></svg>
<span class="t" style="left:16.3px;top:354.0px;font-size:7.3px;color:#3f87ab;letter-spacing:0">Abc</span>
<svg style="left:18px;top:365.05px" width="8.6" height="8.6" viewBox="0 0 8.6 8.6" ><g fill="none" stroke="#3f87ab" stroke-width="1"><rect x=".5" y="1.5" width="7.6" height="6.6"/><path d="M.5,3.6H8.1M2.6,.3V2M6,.3V2"/></g></svg>
<span class="t" style="left:16.3px;top:385.4px;font-size:7.3px;color:#3f87ab;letter-spacing:0">Abc</span>
<svg style="left:18px;top:396.45px" width="8.6" height="8.6" viewBox="0 0 8.6 8.6" ><g fill="none" stroke="#3f87ab" stroke-width="1"><circle cx="4.3" cy="4.3" r="3.8"/><ellipse cx="4.3" cy="4.3" rx="1.7" ry="3.8"/><path d="M.5,4.3H8.1"/></g></svg>
<span class="t" style="left:16.3px;top:416.9px;font-size:7.3px;color:#3f87ab;letter-spacing:0">Abc</span>
<span class="t" style="left:16.3px;top:432.5px;font-size:7.3px;color:#3f87ab;letter-spacing:0">Abc</span>
<svg style="left:18.5px;top:445px" width="8" height="8" viewBox="0 0 8 8" ><path d="M2.6,0V8M5.4,0V8M0,2.6H8M0,5.4H8" fill="none" stroke="#36a58a" stroke-width=".9"/></svg>
<svg style="left:18.5px;top:460.79px" width="8" height="8" viewBox="0 0 8 8" ><path d="M2.6,0V8M5.4,0V8M0,2.6H8M0,5.4H8" fill="none" stroke="#36a58a" stroke-width=".9"/></svg>
<svg style="left:18.5px;top:476.58px" width="8" height="8" viewBox="0 0 8 8" ><path d="M2.6,0V8M5.4,0V8M0,2.6H8M0,5.4H8" fill="none" stroke="#36a58a" stroke-width=".9"/></svg>
<svg style="left:18.5px;top:492.37px" width="8" height="8" viewBox="0 0 8 8" ><path d="M2.6,0V8M5.4,0V8M0,2.6H8M0,5.4H8" fill="none" stroke="#36a58a" stroke-width=".9"/></svg>
<svg style="left:18.5px;top:508.16px" width="8" height="8" viewBox="0 0 8 8" ><path d="M2.6,0V8M5.4,0V8M0,2.6H8M0,5.4H8" fill="none" stroke="#36a58a" stroke-width=".9"/></svg>
<svg style="left:18px;top:523.75px" width="8.6" height="8.6" viewBox="0 0 8.6 8.6" ><g fill="none" stroke="#36a58a" stroke-width="1"><circle cx="4.3" cy="4.3" r="3.8"/><ellipse cx="4.3" cy="4.3" rx="1.7" ry="3.8"/><path d="M.5,4.3H8.1"/></g></svg>
<svg style="left:18px;top:539.54px" width="8.6" height="8.6" viewBox="0 0 8.6 8.6" ><g fill="none" stroke="#36a58a" stroke-width="1"><circle cx="4.3" cy="4.3" r="3.8"/><ellipse cx="4.3" cy="4.3" rx="1.7" ry="3.8"/><path d="M.5,4.3H8.1"/></g></svg>
<svg style="left:18.5px;top:555.53px" width="8" height="8" viewBox="0 0 8 8" ><path d="M2.6,0V8M5.4,0V8M0,2.6H8M0,5.4H8" fill="none" stroke="#36a58a" stroke-width=".9"/></svg>
<svg style="left:176px;top:213.5px" width="11" height="8" viewBox="0 0 11 8" ><g fill="#555"><circle cx="1.2" cy="1.6" r="1"/><circle cx="4.2" cy="1.2" r=".9"/><circle cx="7" cy="2.4" r="1"/><circle cx="3" cy="4.4" r=".8"/><circle cx="9.4" cy="1.4" r=".8"/><path d="M5.5,3.5L9.5,5L7.8,5.6L8.8,7.6L7.8,8L6.9,6L5.6,7Z"/></g></svg>
<svg style="left:262.5px;top:216.5px" width="5" height="3" viewBox="0 0 5 3" ><path d="M0,0H5L2.5,3Z" fill="#555"/></svg>
<svg style="left:178px;top:235.5px" width="11" height="11" viewBox="0 0 11 11" ><circle cx="2.6" cy="2.6" r="2.4" fill="#7b5c8e"/><circle cx="8.4" cy="2.6" r="2.4" fill="#e15a6b"/><circle cx="2.6" cy="8.4" r="2.4" fill="#f0965a"/><circle cx="8.4" cy="8.4" r="2.4" fill="#5b97a6"/></svg>
<svg style="left:173px;top:311px" width="10.5" height="10.5" viewBox="0 0 11 11" ><circle cx="2.6" cy="2.6" r="2.4" fill="#7b5c8e"/><circle cx="8.4" cy="2.6" r="2.4" fill="#e15a6b"/><circle cx="2.6" cy="8.4" r="2.4" fill="#f0965a"/><circle cx="8.4" cy="8.4" r="2.4" fill="#5b97a6"/></svg>
<svg style="left:215px;top:236px" width="11" height="11" viewBox="0 0 11 11" ><g fill="none" stroke="#555" stroke-width="1"><circle cx="6.4" cy="4.6" r="4"/><circle cx="3.4" cy="7.6" r="2.6"/></g></svg>
<svg style="left:252px;top:236px" width="11" height="11" viewBox="0 0 11 11" ><rect x=".6" y=".6" width="9.8" height="9.8" fill="none" stroke="#444" stroke-width="1.1"/><text x="5.5" y="8.6" font-family="Liberation Serif,serif" font-size="8.5" text-anchor="middle" fill="#222">T</text></svg>
<svg style="left:178.5px;top:272px" width="10" height="10" viewBox="0 0 10 10" ><g fill="#444"><circle cx="5" cy="1.3" r="1.3"/><circle cx="1.2" cy="8.6" r="1"/><circle cx="5" cy="8.6" r="1"/><circle cx="8.8" cy="8.6" r="1"/></g><path d="M5,2.5V5.2M1.2,7.4V5.2H8.8V7.4M5,5.2V7.4" fill="none" stroke="#444" stroke-width=".9"/></svg>
<svg style="left:173.5px;top:328.5px" width="10" height="10" viewBox="0 0 10 10" ><g fill="#444"><circle cx="5" cy="1.3" r="1.3"/><circle cx="1.2" cy="8.6" r="1"/><circle cx="5" cy="8.6" r="1"/><circle cx="8.8" cy="8.6" r="1"/></g><path d="M5,2.5V5.2M1.2,7.4V5.2H8.8V7.4M5,5.2V7.4" fill="none" stroke="#444" stroke-width=".9"/></svg>
<svg style="left:173.5px;top:345.5px" width="10" height="10" viewBox="0 0 10 10" ><g fill="#444"><circle cx="5" cy="1.3" r="1.3"/><circle cx="1.2" cy="8.6" r="1"/><circle cx="5" cy="8.6" r="1"/><circle cx="8.8" cy="8.6" r="1"/></g><path d="M5,2.5V5.2M1.2,7.4V5.2H8.8V7.4M5,5.2V7.4" fill="none" stroke="#444" stroke-width=".9"/></svg>
<svg style="left:215px;top:272px" width="11" height="10" viewBox="0 0 11 10" ><path d="M.6,.6H10.4V6.6H5.4L3.2,9.2V6.6H.6Z" fill="none" stroke="#444" stroke-width="1"/></svg>
<svg style="left:288px;top:75px" width="9" height="8" viewBox="0 0 9 8" ><g fill="#555"><rect x="0" y="2.2" width="1.8" height="5.8"/><rect x="3.4" y="2.2" width="1.8" height="5.8"/><rect x="6.8" y="2.2" width="1.8" height="5.8"/><rect x="0" y="0" width="1.8" height="1.4"/><rect x="3.4" y="0" width="1.8" height="1.4"/><rect x="6.8" y="0" width="1.8" height="1.4"/></g></svg>
<svg style="left:288px;top:100.5px" width="9" height="8" viewBox="0 0 9 8" ><g fill="#555"><rect x="2.4" y="0" width="6.6" height="1.6"/><rect x="2.4" y="3" width="6.6" height="1.6"/><rect x="2.4" y="6" width="6.6" height="1.6"/><rect x="0" y="0" width="1.5" height="1.6"/><rect x="0" y="3" width="1.5" height="1.6"/><rect x="0" y="6" width="1.5" height="1.6"/></g></svg>
<div class="mapbtn" style="left:294px;top:160.3px;width:21.4px;height:20.8px"></div>
<svg style="left:300px;top:166px" width="10" height="10" viewBox="0 0 10 10" ><circle cx="5.8" cy="4" r="3.2" fill="none" stroke="#444" stroke-width="1.1"/><path d="M3.6,6.4L.8,9.4" stroke="#444" stroke-width="1.2"/></svg>
<div class="mapbtn" style="left:294px;top:188.3px;width:21.4px;height:81.5px"></div>
<svg style="left:300.8px;top:194.6px" width="7.4" height="7.4" viewBox="0 0 7.4 7.4" ><path d="M3.7,0V7.4M0,3.7H7.4" stroke="#333" stroke-width="1.25"/></svg>
<svg style="left:300.8px;top:216.6px" width="7.4" height="2" viewBox="0 0 7.4 2" ><path d="M0,1H7.4" stroke="#333" stroke-width="1.25"/></svg>
<svg style="left:300px;top:229.8px" width="10.5" height="11.5" viewBox="0 0 10.5 11.5" ><path d="M6.2,.6L9.8,3.2L8.4,4.3L7.6,8L4.6,8.4L2.2,5.4L5,4.2L5.4,1.4ZM3.4,7L.6,11" fill="none" stroke="#444" stroke-width=".95" stroke-linejoin="round"/></svg>
<div class="hd" style="left:297.5px;top:248px;width:14.5px;background:#d4d4d4"></div>
<svg style="left:302.5px;top:256.5px" width="5" height="7" viewBox="0 0 5 7" ><path d="M0,0L5,3.5L0,7Z" fill="#444"/></svg>
<div class="a" style="left:387.8px;top:471.7px;width:121.2px;height:51px;background:#fff;border:1px solid #d4d4d4;box-shadow:1.5px 1.5px 3px rgba(0,0,0,.28)"></div>
<svg style="left:371.5px;top:459.5px" width="13" height="17.5" viewBox="0 0 13 17.5" ><path d="M4.2,9.4V1.9C4.2,.5 6.2,.5 6.2,1.9V6.2C6.2,5 8,5 8,6.2C8.2,5.4 9.8,5.6 9.8,6.8C10,6.2 11.6,6.4 11.6,7.6V11.4C11.6,14.6 10.4,16.8 7.6,16.8H6.6C4.6,16.8 3.6,15.6 2.6,13.8L.8,10.8C.2,9.6 1.8,8.6 2.8,10Z" fill="#fff" stroke="#111" stroke-width="1" stroke-linejoin="round"/><path d="M6.2,6.2V9.4M8,6.4V9.4M9.8,7V9.6" stroke="#111" stroke-width=".8" fill="none"/></svg>
<svg style="left:9px;top:741px" width="6" height="8" viewBox="0 0 6 8" ><path d="M.5,1.5C.5,.2 5.5,.2 5.5,1.5V6.5C5.5,7.8 .5,7.8 .5,6.5Z M.5,1.5C.5,2.8 5.5,2.8 5.5,1.5" fill="none" stroke="#666" stroke-width=".9"/></svg>
<div class="vd" style="left:98px;top:735px;height:22px;background:#d2d2d2"></div>
<div class="vd" style="left:138px;top:735px;height:22px;background:#d2d2d2"></div>
<div class="vd" style="left:195px;top:735px;height:22px;background:#d2d2d2"></div>
<div class="vd" style="left:247px;top:735px;height:22px;background:#d2d2d2"></div>
<div class="vd" style="left:361.5px;top:735px;height:22px;background:#d2d2d2"></div>
<div class="vd" style="left:385.5px;top:735px;height:22px;background:#d2d2d2"></div>
<div class="vd" style="left:409.5px;top:735px;height:22px;background:#d2d2d2"></div>
<svg style="left:344px;top:740px" width="11" height="11" viewBox="0 0 12 12" ><rect x=".5" y=".5" width="8.6" height="8" fill="none" stroke="#666" stroke-width="1"/><path d="M2.6,6.6V5M4.6,6.6V3M6.6,6.6V4.2" stroke="#777" stroke-width="1"/><rect x="6.2" y="6.2" width="6" height="6" fill="#e6e6e6"/><path d="M9.2,6.8V11.8M6.7,9.3H11.7" stroke="#333" stroke-width="1.3"/></svg>
<svg style="left:368px;top:740px" width="11" height="11" viewBox="0 0 12 12" ><rect x=".5" y=".5" width="8.6" height="8" fill="none" stroke="#666" stroke-width="1"/><path d="M.5,4.5H9M4.8,.5V8.5" stroke="#666" stroke-width="1"/><rect x="6.2" y="6.2" width="6" height="6" fill="#e6e6e6"/><path d="M9.2,6.8V11.8M6.7,9.3H11.7" stroke="#333" stroke-width="1.3"/></svg>
<svg style="left:392px;top:740px" width="11" height="11" viewBox="0 0 12 12" ><path d="M.5,1.2C2,0.2 3.4,.2 4.8,1.4C6.2,.2 7.6,.2 9.1,1.2V8.6C7.6,7.8 6.2,7.8 4.8,8.8C3.4,7.8 2,7.8 .5,8.6ZM4.8,1.4V8.8" fill="none" stroke="#666" stroke-width="1"/><rect x="6.2" y="6.2" width="6" height="6" fill="#e6e6e6"/><path d="M9.2,6.8V11.8M6.7,9.3H11.7" stroke="#333" stroke-width="1.3"/></svg>
<div class="vd" style="left:843px;top:758px;height:14px;background:#d6d6d6"></div>
<div class="vd" style="left:863px;top:758px;height:14px;background:#d6d6d6"></div>
<div class="vd" style="left:884px;top:758px;height:14px;background:#d6d6d6"></div>
<div class="vd" style="left:919.5px;top:758px;height:14px;background:#d6d6d6"></div>
<div class="vd" style="left:972.5px;top:758px;height:14px;background:#d6d6d6"></div>
<div class="vd" style="left:597px;top:758px;height:14px;background:#dadada"></div>
<svg style="left:926px;top:761.5px" width="6" height="6" viewBox="0 0 6 6" ><path d="M.5,0V6" stroke="#c4c4c4" stroke-width="1"/><path d="M5.5,0L1.5,3L5.5,6Z" fill="#c4c4c4"/></svg>
<svg style="left:938.5px;top:761.5px" width="4" height="6" viewBox="0 0 4 6" ><path d="M4,0L0,3L4,6Z" fill="#c4c4c4"/></svg>
<svg style="left:950px;top:761.5px" width="4" height="6" viewBox="0 0 4 6" ><path d="M0,0L4,3L0,6Z" fill="#c4c4c4"/></svg>
<svg style="left:961px;top:761.5px" width="6" height="6" viewBox="0 0 6 6" ><path d="M5.5,0V6" stroke="#c4c4c4" stroke-width="1"/><path d="M.5,0L4.5,3L.5,6Z" fill="#c4c4c4"/></svg>
<svg style="left:979px;top:760.5px" width="8.4" height="8.4" viewBox="0 0 8.4 8.4" ><g fill="#b5b5b5"><rect x="0" y="0" width="2" height="2"/><rect x="0" y="3.2" width="2" height="2"/><rect x="0" y="6.4" width="2" height="2"/><rect x="3.2" y="0" width="2" height="2"/><rect x="3.2" y="3.2" width="2" height="2"/><rect x="3.2" y="6.4" width="2" height="2"/><rect x="6.4" y="0" width="2" height="2"/><rect x="6.4" y="3.2" width="2" height="2"/><rect x="6.4" y="6.4" width="2" height="2"/></g></svg>
<svg style="left:995px;top:760.5px" width="8.4" height="8.4" viewBox="0 0 8.4 8.4" ><rect x="0" y="0" width="8.4" height="4.6" fill="#b9b9b9"/><rect x="0" y="6" width="2" height="2" fill="#b5b5b5"/><rect x="3.2" y="6" width="2" height="2" fill="#b5b5b5"/><rect x="6.4" y="6" width="2" height="2" fill="#b5b5b5"/></svg>
<svg style="left:1010.5px;top:760.5px" width="8.6" height="8.6" viewBox="0 0 8.6 8.6" ><rect width="8.6" height="8.6" fill="#5e5e5e"/></svg>
<span class="t" style="left:23.4px;top:11.2px;font-size:9.8px;color:#1b1b1b;"><span class="r" style="transform:scaleX(0.900);margin-right:-6.48px">Tableau&nbsp;-&nbsp;0526</span><span class="r j" style="transform:scaleX(0.682);margin-right:-46.42px">オレンジサンプルスーパーストア</span></span>
<span class="t" style="left:7.0px;top:31.3px;font-size:9.8px;color:#1b1b1b;"><span class="r j" style="transform:scaleX(0.606);margin-right:-15.45px">ファイル</span><span class="r" style="transform:scaleX(0.900);margin-right:-1.25px">(F)</span></span>
<span class="t" style="left:54.0px;top:31.3px;font-size:9.8px;color:#1b1b1b;"><span class="r j" style="transform:scaleX(0.689);margin-right:-9.14px">データ</span><span class="r" style="transform:scaleX(0.900);margin-right:-1.36px">(D)</span></span>
<span class="t" style="left:98.0px;top:31.3px;font-size:9.8px;color:#1b1b1b;"><span class="r j" style="transform:scaleX(0.660);margin-right:-19.98px">ワークシート</span><span class="r" style="transform:scaleX(0.900);margin-right:-1.58px">(W)</span></span>
<span class="t" style="left:163.0px;top:31.3px;font-size:9.8px;color:#1b1b1b;"><span class="r j" style="transform:scaleX(0.660);margin-right:-23.33px">ダッシュボード</span><span class="r" style="transform:scaleX(0.900);margin-right:-1.31px">(B)</span></span>
<span class="t" style="left:231.5px;top:31.3px;font-size:9.8px;color:#1b1b1b;"><span class="r j" style="transform:scaleX(0.607);margin-right:-19.25px">ストーリー</span><span class="r" style="transform:scaleX(0.900);margin-right:-1.25px">(T)</span></span>
<span class="t" style="left:285.0px;top:31.3px;font-size:9.8px;color:#1b1b1b;"><span class="r j" style="transform:scaleX(0.880);margin-right:-2.35px">分析</span><span class="r" style="transform:scaleX(0.900);margin-right:-1.31px">(A)</span></span>
<span class="t" style="left:326.5px;top:31.3px;font-size:9.8px;color:#1b1b1b;"><span class="r j" style="transform:scaleX(0.690);margin-right:-9.11px">マップ</span><span class="r" style="transform:scaleX(0.900);margin-right:-1.47px">(M)</span></span>
<span class="t" style="left:372.5px;top:31.3px;font-size:9.8px;color:#1b1b1b;"><span class="r j" style="transform:scaleX(0.913);margin-right:-3.43px">書式設定</span><span class="r" style="transform:scaleX(0.900);margin-right:-1.42px">(O)</span></span>
<span class="t" style="left:433.0px;top:31.3px;font-size:9.8px;color:#1b1b1b;"><span class="r j" style="transform:scaleX(0.646);margin-right:-13.85px">サーバー</span><span class="r" style="transform:scaleX(0.900);margin-right:-1.31px">(S)</span></span>
<span class="t" style="left:482.0px;top:31.3px;font-size:9.8px;color:#1b1b1b;"><span class="r j" style="transform:scaleX(0.658);margin-right:-16.73px">ウィンドウ</span><span class="r" style="transform:scaleX(0.900);margin-right:-1.36px">(N)</span></span>
<span class="t" style="left:538.0px;top:31.3px;font-size:9.8px;color:#1b1b1b;"><span class="r j" style="transform:scaleX(0.774);margin-right:-6.64px">ヘルプ</span><span class="r" style="transform:scaleX(0.900);margin-right:-1.36px">(H)</span></span>
<span class="t" style="left:963.0px;top:53.5px;font-size:10px;color:#222;"><span class="r j" style="transform:scaleX(0.975);margin-right:-1.00px">表示形式</span></span>
<span class="t" style="left:14.0px;top:80.6px;font-size:10px;color:#222;"><span class="r j" style="transform:scaleX(0.767);margin-right:-7.00px">データ</span></span>
<span class="t" style="left:64.0px;top:80.6px;font-size:10px;color:#333;"><span class="r j" style="transform:scaleX(0.689);margin-right:-21.41px">アナリティクス</span></span>
<span class="t" style="left:32.5px;top:101.0px;font-size:10px;color:#555;"><span class="r" style="transform:scaleX(0.964);margin-right:-3.98px">Orders&nbsp;(sample_-_sup···</span></span>
<span class="t" style="left:12.8px;top:126.7px;font-size:9.2px;color:#b0b0b0;"><span class="r j" style="transform:scaleX(0.903);margin-right:-1.77px">検索</span></span>
<span class="t" style="left:14.4px;top:148.5px;font-size:10px;color:#222;"><span class="r j" style="transform:scaleX(0.761);margin-right:-9.41px">テーブル</span></span>
<span class="t" style="left:36.0px;top:165.8px;font-size:9.8px;color:#333;"><span class="r" style="transform:scaleX(0.990);margin-right:-0.40px">Category</span></span>
<span class="t" style="left:36.0px;top:181.4px;font-size:9.8px;color:#333;"><span class="r" style="transform:scaleX(0.990);margin-right:-0.17px">City</span></span>
<span class="t" style="left:36.0px;top:197.2px;font-size:9.8px;color:#333;"><span class="r" style="transform:scaleX(0.990);margin-right:-0.34px">Country</span></span>
<span class="t" style="left:36.0px;top:212.8px;font-size:9.8px;color:#333;"><span class="r" style="transform:scaleX(0.990);margin-right:-0.55px">Customer&nbsp;ID</span></span>
<span class="t" style="left:36.0px;top:228.6px;font-size:9.8px;color:#333;"><span class="r" style="transform:scaleX(0.990);margin-right:-0.71px">Customer&nbsp;Name</span></span>
<span class="t" style="left:36.0px;top:244.2px;font-size:9.8px;color:#333;"><span class="r" style="transform:scaleX(0.990);margin-right:-0.48px">Order&nbsp;Date</span></span>
<span class="t" style="left:36.0px;top:259.9px;font-size:9.8px;color:#333;"><span class="r" style="transform:scaleX(0.990);margin-right:-0.38px">Order&nbsp;ID</span></span>
<span class="t" style="left:36.0px;top:275.6px;font-size:9.8px;color:#333;"><span class="r" style="transform:scaleX(0.990);margin-right:-0.53px">Postal&nbsp;Code</span></span>
<span class="t" style="left:36.0px;top:291.4px;font-size:9.8px;color:#333;"><span class="r" style="transform:scaleX(0.990);margin-right:-0.46px">Product&nbsp;ID</span></span>
<span class="t" style="left:36.0px;top:307.0px;font-size:9.8px;color:#333;"><span class="r" style="transform:scaleX(0.990);margin-right:-0.63px">Product&nbsp;Name</span></span>
<span class="t" style="left:36.0px;top:322.8px;font-size:9.8px;color:#333;"><span class="r" style="transform:scaleX(0.990);margin-right:-0.31px">Region</span></span>
<span class="t" style="left:36.0px;top:338.4px;font-size:9.8px;color:#333;"><span class="r" style="transform:scaleX(0.990);margin-right:-0.32px">Row&nbsp;ID</span></span>
<span class="t" style="left:36.0px;top:354.1px;font-size:9.8px;color:#333;"><span class="r" style="transform:scaleX(0.990);margin-right:-0.39px">Segment</span></span>
<span class="t" style="left:36.0px;top:369.9px;font-size:9.8px;color:#333;"><span class="r" style="transform:scaleX(0.990);margin-right:-0.43px">Ship&nbsp;Date</span></span>
<span class="t" style="left:36.0px;top:385.5px;font-size:9.8px;color:#333;"><span class="r" style="transform:scaleX(0.990);margin-right:-0.47px">Ship&nbsp;Mode</span></span>
<span class="t" style="left:36.0px;top:401.2px;font-size:9.8px;color:#333;"><span class="r" style="transform:scaleX(0.990);margin-right:-0.23px">State</span></span>
<span class="t" style="left:36.0px;top:416.9px;font-size:9.8px;color:#333;"><span class="r" style="transform:scaleX(0.990);margin-right:-0.60px">Sub-Category</span></span>
<span class="t" style="left:36.0px;top:432.6px;font-size:9.8px;color:#333;"><span class="r j" style="transform:scaleX(0.730);margin-right:-19.03px">メジャー&nbsp;ネーム</span></span>
<span class="t" style="left:36.0px;top:449.6px;font-size:9.8px;color:#333;"><span class="r" style="transform:scaleX(0.990);margin-right:-0.38px">Discount</span></span>
<span class="t" style="left:36.0px;top:465.4px;font-size:9.8px;color:#333;"><span class="r" style="transform:scaleX(0.990);margin-right:-0.23px">Profit</span></span>
<span class="t" style="left:36.0px;top:481.2px;font-size:9.8px;color:#333;"><span class="r" style="transform:scaleX(0.990);margin-right:-0.37px">Quantity</span></span>
<span class="t" style="left:36.0px;top:497.0px;font-size:9.8px;color:#333;"><span class="r" style="transform:scaleX(0.990);margin-right:-0.25px">Sales</span></span>
<span class="t" style="left:36.0px;top:512.8px;font-size:9.8px;color:#333;font-style:italic"><span class="r" style="transform:scaleX(0.990);margin-right:-0.36px">Orders&nbsp;(</span><span class="r j" style="transform:scaleX(0.694);margin-right:-12.00px">カウント</span><span class="r" style="transform:scaleX(0.990);margin-right:-0.03px">)</span></span>
<span class="t" style="left:36.0px;top:528.5px;font-size:9.8px;color:#333;font-style:italic"><span class="r j" style="transform:scaleX(0.955);margin-right:-1.01px">経度&nbsp;</span><span class="r" style="transform:scaleX(0.990);margin-right:-0.03px">(</span><span class="r j" style="transform:scaleX(0.955);margin-right:-0.88px">生成</span><span class="r" style="transform:scaleX(0.990);margin-right:-0.03px">)</span></span>
<span class="t" style="left:36.0px;top:544.3px;font-size:9.8px;color:#333;font-style:italic"><span class="r j" style="transform:scaleX(0.955);margin-right:-1.01px">緯度&nbsp;</span><span class="r" style="transform:scaleX(0.990);margin-right:-0.03px">(</span><span class="r j" style="transform:scaleX(0.955);margin-right:-0.88px">生成</span><span class="r" style="transform:scaleX(0.990);margin-right:-0.03px">)</span></span>
<span class="t" style="left:36.0px;top:560.1px;font-size:9.8px;color:#333;"><span class="r j" style="transform:scaleX(0.691);margin-right:-24.91px">メジャー&nbsp;バリュー</span></span>
<span class="t" style="left:168.0px;top:82.2px;font-size:9.2px;color:#555;"><span class="r j" style="transform:scaleX(0.803);margin-right:-5.39px">ページ</span></span>
<span class="t" style="left:168.0px;top:133.9px;font-size:9.2px;color:#555;"><span class="r j" style="transform:scaleX(0.699);margin-right:-13.77px">フィルター</span></span>
<span class="t" style="left:168.0px;top:196.3px;font-size:9.2px;color:#555;"><span class="r j" style="transform:scaleX(0.689);margin-right:-8.56px">マーク</span></span>
<span class="t" style="left:190.5px;top:218.4px;font-size:9px;color:#333;"><span class="r j" style="transform:scaleX(0.944);margin-right:-1.02px">自動</span></span>
<span class="t" style="left:181.0px;top:256.2px;font-size:7.2px;color:#444;"><span class="r j" style="transform:scaleX(0.833);margin-right:-1.20px">色</span></span>
<span class="t" style="left:212.0px;top:256.2px;font-size:7.2px;color:#444;"><span class="r j" style="transform:scaleX(0.796);margin-right:-4.36px">サイズ</span></span>
<span class="t" style="left:249.5px;top:256.2px;font-size:7.2px;color:#444;"><span class="r j" style="transform:scaleX(0.741);margin-right:-5.58px">ラベル</span></span>
<span class="t" style="left:176.5px;top:292.5px;font-size:7.2px;color:#444;"><span class="r j" style="transform:scaleX(0.938);margin-right:-0.89px">詳細</span></span>
<span class="t" style="left:205.0px;top:292.5px;font-size:7.2px;color:#444;"><span class="r j" style="transform:scaleX(0.719);margin-right:-12.14px">ツールヒント</span></span>
<span class="t ns" style="left:194.0px;top:316.4px;font-size:10px;color:#fff;"><span class="r j" style="transform:scaleX(0.938);margin-right:-1.24px">合計</span><span class="r" style="transform:scaleX(0.970);margin-right:-0.95px">(Sales)</span></span>
<span class="t ns" style="left:194.0px;top:333.7px;font-size:10px;color:#fff;"><span class="r">Country</span></span>
<span class="t ns" style="left:194.0px;top:350.8px;font-size:10px;color:#fff;"><span class="r" style="transform:scaleX(1.006);margin-right:0.14px">State</span></span>
<span class="t" style="left:302.0px;top:79.5px;font-size:9.6px;color:#444;"><span class="r j" style="transform:scaleX(0.990);margin-right:-0.09px">列</span></span>
<span class="t" style="left:302.0px;top:104.5px;font-size:9.6px;color:#444;"><span class="r j" style="transform:scaleX(0.990);margin-right:-0.09px">行</span></span>
<span class="t ns" style="left:386.0px;top:79.8px;font-size:10px;color:#fff;"><span class="r j" style="transform:scaleX(0.942);margin-right:-1.31px">経度&nbsp;</span><span class="r">(</span><span class="r j" style="transform:scaleX(0.942);margin-right:-1.15px">生成</span><span class="r">)</span></span>
<span class="t ns" style="left:386.0px;top:104.8px;font-size:10px;color:#fff;"><span class="r j" style="transform:scaleX(0.942);margin-right:-1.31px">緯度&nbsp;</span><span class="r">(</span><span class="r j" style="transform:scaleX(0.942);margin-right:-1.15px">生成</span><span class="r">)</span></span>
<span class="t" style="left:291.0px;top:139.0px;font-size:13.6px;color:#555;"><span class="r j" style="transform:scaleX(0.818);margin-right:-8.13px">シート&nbsp;</span><span class="r">5</span></span>
<span class="t" style="left:909.0px;top:132.3px;font-size:9.6px;color:#444;"><span class="r j" style="transform:scaleX(0.965);margin-right:-0.67px">合計</span><span class="r" style="transform:scaleX(0.970);margin-right:-0.91px">(Sales)</span></span>
<span class="t" style="left:907.3px;top:164.7px;font-size:9.6px;color:#444;"><span class="r">920</span></span>
<span class="t" style="left:979.3px;top:164.7px;font-size:9.6px;color:#444;"><span class="r" style="transform:scaleX(1.009);margin-right:0.31px">457,688</span></span>
<span class="t" style="left:393.9px;top:484.5px;font-size:9.6px;color:#8c8c8c;"><span class="r" style="transform:scaleX(1.056);margin-right:2.03px">Country:</span></span>
<span class="t" style="left:436.3px;top:484.5px;font-size:9.5px;color:#484848;-webkit-text-stroke:.35px #484848"><span class="r" style="transform:scaleX(1.096);margin-right:5.45px">United&nbsp;States</span></span>
<span class="t" style="left:393.9px;top:497.8px;font-size:9.6px;color:#8c8c8c;"><span class="r" style="transform:scaleX(1.049);margin-right:1.22px">State:</span></span>
<span class="t" style="left:436.3px;top:497.8px;font-size:9.5px;color:#484848;-webkit-text-stroke:.35px #484848"><span class="r" style="transform:scaleX(1.096);margin-right:3.86px">California</span></span>
<span class="t" style="left:393.9px;top:511.1px;font-size:9.6px;color:#8c8c8c;"><span class="r" style="transform:scaleX(0.971);margin-right:-0.77px">Sales:</span></span>
<span class="t" style="left:436.3px;top:511.1px;font-size:9.5px;color:#484848;-webkit-text-stroke:.35px #484848"><span class="r" style="transform:scaleX(1.086);margin-right:2.96px">457,688</span></span>
<span class="t" style="left:291.0px;top:718.3px;font-size:8.6px;color:#555;"><span class="r" style="transform:scaleX(0.958);margin-right:-5.58px">©&nbsp;2025&nbsp;Mapbox&nbsp;©&nbsp;OpenStreetMap</span></span>
<span class="t" style="left:18.5px;top:745.5px;font-size:9.4px;color:#444;"><span class="r j" style="transform:scaleX(0.779);margin-right:-12.89px">データ&nbsp;ソース</span></span>
<span class="t" style="left:103.5px;top:745.5px;font-size:9.4px;color:#444;"><span class="r j" style="transform:scaleX(0.746);margin-right:-9.52px">棒グラフ</span></span>
<span class="t" style="left:143.0px;top:745.5px;font-size:9.4px;color:#444;"><span class="r j" style="transform:scaleX(0.809);margin-right:-10.77px">折れ線グラフ</span></span>
<span class="t" style="left:198.5px;top:745.5px;font-size:9.4px;color:#444;"><span class="r j" style="transform:scaleX(0.702);margin-right:-16.77px">ツリーマップ</span></span>
<span class="t" style="left:252.0px;top:745.5px;font-size:9.4px;color:#444;"><span class="r j" style="transform:scaleX(0.789);margin-right:-9.89px">クロス集計</span></span>
<span class="t" style="left:301.5px;top:745.5px;font-size:9.4px;color:#444;"><span class="r j" style="transform:scaleX(0.774);margin-right:-6.95px">シート&nbsp;</span><span class="r">5</span></span>
<span class="t" style="left:3.0px;top:765.6px;font-size:9.4px;color:#222;"><span class="r" style="transform:scaleX(0.950);margin-right:-0.65px">49&nbsp;</span><span class="r j" style="transform:scaleX(0.738);margin-right:-12.29px">個のマーク</span></span>
<span class="t" style="left:70.0px;top:765.6px;font-size:9.4px;color:#222;"><span class="r" style="transform:scaleX(0.950);margin-right:-0.39px">1&nbsp;</span><span class="r j" style="transform:scaleX(0.904);margin-right:-3.21px">行&nbsp;基準&nbsp;</span><span class="r" style="transform:scaleX(0.950);margin-right:-0.39px">1&nbsp;</span><span class="r j" style="transform:scaleX(0.904);margin-right:-0.90px">列</span></span>
<span class="t" style="left:143.0px;top:765.6px;font-size:9.4px;color:#222;"><span class="r j" style="transform:scaleX(0.928);margin-right:-1.36px">合計</span><span class="r" style="transform:scaleX(0.980);margin-right:-1.53px">(Sales):&nbsp;2,297,201</span></span>
</body></html>
